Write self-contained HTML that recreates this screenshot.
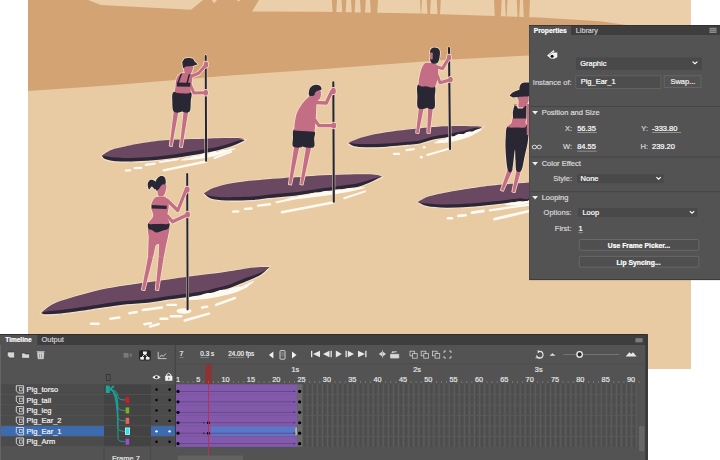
<!DOCTYPE html>
<html><head><meta charset="utf-8">
<style>
html,body{margin:0;padding:0;width:720px;height:460px;overflow:hidden;background:#fff;}
svg{position:absolute;left:0;top:0;display:block;}
text{font-family:"Liberation Sans",sans-serif;}
</style></head><body>
<svg width="720" height="460" viewBox="0 0 720 460">
<defs><clipPath id="cs"><rect x="28" y="0" width="663" height="369"/></clipPath></defs>

<g clip-path="url(#cs)">
<rect x="28" y="0" width="663" height="369" fill="#e8caa3"/>
<rect x="28" y="0" width="663" height="30" fill="#ebcfab"/>
<polygon fill="#d4a373" points="28,0 88,0 101,5 191,9.7 203,0 211.7,0 214,3.5 217,0 236.7,0 238.5,1.5 240.8,0 259,0 252,11.4 320,11.8 420,13.5 540,17.5 600,21.2 630,25.5 691,30 691,52 529,55.5 450,59.5 310,70 230,75.5 108,85.5 28,91"/>
<polygon fill="#d4a373" points="331.8,0 337,0 336.2,12.8 332.6,12.8"/>
<polygon fill="#d4a373" points="341.5,0 346.4,0 345.59999999999997,13 342.3,13"/>
<polygon fill="#d4a373" points="351,0 355.4,0 354.59999999999997,13 351.8,13"/>
<polygon fill="#d4a373" points="360,0 365.8,0 365.0,13 360.8,13"/>
<polygon fill="#d4a373" points="370,0 378,0 377.2,13.2 370.8,13.2"/>
<polygon fill="#d4a373" points="420,0 422,0 421.2,14.5 420.8,14.5"/>
<polygon fill="#d4a373" points="426.7,0 430.8,0 430.0,14.6 427.5,14.6"/>
<polygon fill="#d4a373" points="436.7,0 440.8,0 440.0,14.8 437.5,14.8"/>
<polygon fill="#d4a373" points="494,0 501.7,0 500.9,16.5 494.8,16.5"/>
<polygon fill="#d4a373" points="505,0 507.5,0 506.7,16.6 505.8,16.6"/>
<polygon fill="#d4a373" points="516.7,0 520,0 519.2,17 517.5,17"/>
<polygon fill="#d4a373" points="523,0 530,0 529.2,17.2 523.8,17.2"/>
</g>
<g clip-path="url(#cs)">
<line x1="125.8" y1="170.5" x2="130.2" y2="170.3" stroke="#fdfaf3" stroke-width="2.2" stroke-linecap="round"/>
<line x1="134.7" y1="168.2" x2="141.3" y2="167.8" stroke="#fdfaf3" stroke-width="2.2" stroke-linecap="round"/>
<line x1="145.8" y1="164.9" x2="154.7" y2="163.7" stroke="#fdfaf3" stroke-width="2.3" stroke-linecap="round"/>
<line x1="160" y1="162" x2="178" y2="159.2" stroke="#fdfaf3" stroke-width="2.2" stroke-linecap="round"/>
<line x1="163.6" y1="170.3" x2="206" y2="161.5" stroke="#fdfaf3" stroke-width="2.3" stroke-linecap="round"/>
<line x1="214.4" y1="158" x2="231" y2="151.9" stroke="#fdfaf3" stroke-width="2.0" stroke-linecap="round"/>
<path d="M101.3,155.9 C102.6,155.1 105.9,152.3 109.1,150.9 C112.2,149.5 114.7,148.9 120.2,147.6 C125.8,146.3 135.0,144.3 142.4,143.1 C149.8,141.9 156.4,141.0 164.7,140.3 C173.0,139.6 183.9,139.4 192.2,139.1 C200.5,138.8 207.0,138.4 214.4,138.2 C221.8,138.0 231.4,137.8 236.7,138.0 C242.0,138.2 244.5,139.4 246.1,139.7 C245.4,140.1 244.7,141.2 242.2,142.4 C239.7,143.7 234.8,145.9 231.1,147.2 C227.4,148.5 223.7,149.5 220.0,150.4 C216.3,151.3 213.5,151.9 208.9,152.8 C204.3,153.7 198.7,154.7 192.2,155.8 C185.7,156.9 176.4,158.3 170.0,159.2 C163.6,160.1 160.0,160.5 153.6,161.0 C147.2,161.5 137.8,162.1 131.3,162.2 C124.8,162.3 119.1,162.2 114.7,161.8 C110.3,161.4 106.9,160.6 104.7,159.6 C102.5,158.6 101.9,156.5 101.3,155.9 Z" fill="#2d2637" stroke="#f3e2c9" stroke-width="1.3" stroke-linejoin="round"/>
<path d="M101.3,155.9 C102.6,155.1 105.9,152.3 109.1,150.9 C112.2,149.5 114.7,148.9 120.2,147.6 C125.8,146.3 135.0,144.3 142.4,143.1 C149.8,141.9 156.4,141.0 164.7,140.3 C173.0,139.6 183.9,139.4 192.2,139.1 C200.5,138.8 207.0,138.4 214.4,138.2 C221.8,138.0 231.4,137.8 236.7,138.0 C242.0,138.2 244.5,139.4 246.1,139.7 C245.4,139.7 244.7,139.0 242.2,139.6 C239.7,140.2 234.8,141.9 231.1,143.0 C227.4,144.1 223.7,145.3 220.0,146.2 C216.3,147.1 213.5,147.7 208.9,148.6 C204.3,149.5 198.7,150.5 192.2,151.6 C185.7,152.7 176.4,154.1 170.0,155.0 C163.6,155.9 160.0,156.3 153.6,156.8 C147.2,157.3 137.8,157.9 131.3,158.0 C124.8,158.1 119.1,157.9 114.7,157.6 C110.3,157.3 106.9,156.4 104.7,156.1 C102.5,155.8 101.9,155.9 101.3,155.9 Z" fill="#6a4862"/>
<path d="M180.0,160.4 L180.7,160.0 L181.4,159.6 L182.1,159.3 L182.8,159.0 L183.5,158.7 L184.3,158.4 L185.0,158.2 L185.7,158.0 L186.4,157.9 L187.1,157.8 L187.8,157.7 L188.5,157.7 L189.2,157.8 L189.9,157.6 L190.6,157.1 L191.3,156.8 L192.1,156.4 L192.8,156.2 L193.5,155.9 L194.2,155.7 L194.9,155.6 L195.6,155.5 L196.3,155.4 L197.0,155.5 L197.7,155.6 L198.4,155.8 L199.1,155.8 L199.8,155.2 L200.5,154.8 L201.2,154.4 L201.9,154.1 L202.7,153.8 L203.4,153.6 L204.1,153.5 L204.8,153.4 L205.5,153.4 L206.2,153.5 L206.9,153.6 L207.6,153.8 L208.3,154.3 L209.0,153.6 L209.7,153.1 L210.4,152.7 L211.1,152.4 L211.8,152.1 L212.5,151.9 L213.2,151.7 L213.9,151.6 L214.6,151.6 L215.3,151.6 L216.0,151.7 L216.7,151.9 L217.4,152.2 L218.1,151.9 L218.8,151.4 L219.5,151.0 L220.2,150.7 L220.9,150.5 L221.6,150.3 L222.3,150.1 L223.0,150.0 L223.6,149.9 L224.3,149.9 L225.0,149.9 L225.7,150.0 L226.4,150.1 L227.1,150.1 L227.8,149.6 L228.5,149.3 L229.1,149.1 L229.8,148.8 L230.5,148.7 L231.2,148.6 L231.9,148.5 L232.6,148.5 L233.3,148.4 L233.9,148.4 L234.6,148.5 L235.3,148.5 L236.0,148.6 L236.0,148.6 L235.3,149.0 L234.6,149.4 L233.9,149.7 L233.3,149.9 L232.6,150.2 L231.9,150.5 L231.2,150.8 L230.5,151.0 L229.8,151.3 L229.1,151.6 L228.5,151.8 L227.8,152.1 L227.1,152.3 L226.4,152.6 L225.7,152.8 L225.0,153.1 L224.3,153.3 L223.6,153.5 L223.0,153.8 L222.3,154.0 L221.6,154.2 L220.9,154.4 L220.2,154.6 L219.5,154.8 L218.8,155.0 L218.1,155.2 L217.4,155.3 L216.7,155.5 L216.0,155.7 L215.3,155.9 L214.6,156.1 L213.9,156.2 L213.2,156.4 L212.5,156.6 L211.8,156.8 L211.1,156.9 L210.4,157.1 L209.7,157.2 L209.0,157.4 L208.3,157.5 L207.6,157.6 L206.9,157.7 L206.2,157.9 L205.5,158.0 L204.8,158.1 L204.1,158.2 L203.4,158.3 L202.7,158.4 L201.9,158.5 L201.2,158.6 L200.5,158.8 L199.8,158.9 L199.1,159.0 L198.4,159.1 L197.7,159.2 L197.0,159.3 L196.3,159.4 L195.6,159.5 L194.9,159.5 L194.2,159.6 L193.5,159.7 L192.8,159.8 L192.1,159.8 L191.3,159.9 L190.6,160.0 L189.9,160.0 L189.2,160.1 L188.5,160.1 L187.8,160.2 L187.1,160.3 L186.4,160.3 L185.7,160.4 L185.0,160.4 L184.3,160.4 L183.5,160.5 L182.8,160.5 L182.1,160.5 L181.4,160.5 L180.7,160.5 L180.0,160.4 Z" fill="#fdfaf3"/>
<line x1="205.7" y1="56" x2="206.1" y2="160.8" stroke="#f3e2c9" stroke-width="2.9" stroke-linecap="round"/>
<line x1="205.7" y1="56" x2="206.1" y2="160.8" stroke="#262430" stroke-width="2.0" stroke-linecap="round"/>
<path d="M174.2,107.6 L169.6,145.8 L172.0,146.2 L179.0,108.4 Z" fill="#f3e2c9" stroke="#f3e2c9" stroke-width="1.5" stroke-linejoin="round"/>
<path d="M184.0,107.7 L179.8,146.8 L182.2,147.2 L188.8,108.3 Z" fill="#f3e2c9" stroke="#f3e2c9" stroke-width="1.5" stroke-linejoin="round"/>
<path d="M191.0,76.5 L198.6,73.2 L204.5,66.4" fill="none" stroke="#f3e2c9" stroke-width="4.5" stroke-linecap="round" stroke-linejoin="round"/>
<path d="M189.8,83.5 L194.0,93.1 L204.5,92.7" fill="none" stroke="#f3e2c9" stroke-width="4.5" stroke-linecap="round" stroke-linejoin="round"/>
<path d="M173.3,92.3 C174.8,90.8 178.6,92.0 181.5,92.0 C184.4,92.0 189.4,90.9 191.0,92.4 C192.6,93.9 191.0,97.8 190.8,101.0 C190.6,104.2 191.0,109.8 189.6,111.6 C188.2,113.4 183.8,112.6 182.6,111.8 C181.4,111.0 182.4,106.5 182.2,106.5 C182.0,106.5 183.0,111.0 181.6,111.8 C180.2,112.6 175.4,113.4 173.8,111.6 C172.2,109.8 172.4,104.2 172.3,101.0 C172.2,97.8 171.8,93.8 173.3,92.3 Z" fill="#f3e2c9" stroke="#f3e2c9" stroke-width="1.5" stroke-linejoin="round"/>
<path d="M181.0,73.4 C182.5,72.6 184.3,73.0 186.0,73.0 C187.7,73.0 190.0,72.3 191.0,73.5 C192.0,74.7 192.3,77.9 192.2,80.0 C192.1,82.1 191.0,83.9 190.6,86.0 C190.2,88.1 191.4,91.6 190.0,92.8 C188.6,94.0 184.4,93.3 182.0,93.2 C179.6,93.1 176.5,93.5 175.4,92.3 C174.3,91.1 175.4,88.4 175.6,86.0 C175.8,83.6 175.9,80.1 176.8,78.0 C177.7,75.9 179.5,74.2 181.0,73.4 Z" fill="#f3e2c9" stroke="#f3e2c9" stroke-width="1.5" stroke-linejoin="round"/>
<path d="M184.3,66.5 C185.5,65.2 191.4,65.7 192.8,66.2 C194.2,66.7 193.0,68.2 192.6,69.5 C192.2,70.8 191.7,73.0 190.5,73.8 C189.3,74.5 186.5,75.2 185.5,74.0 C184.5,72.8 183.1,67.8 184.3,66.5 Z" fill="#f3e2c9" stroke="#f3e2c9" stroke-width="1.5" stroke-linejoin="round"/>
<path d="M183.0,68.2 L182.2,62.0 L184.5,58.6 L189.0,57.7 L193.0,58.8 L194.8,61.8 L197.8,64.3 L192.8,65.9 L186.0,66.6 Z" fill="#f3e2c9" stroke="#f3e2c9" stroke-width="1.5" stroke-linejoin="round"/>
<path d="M203.8,64.6 a2.2,3.2 0 1,0 4.4,0 a2.2,3.2 0 1,0 -4.4,0 Z" fill="#f3e2c9" stroke="#f3e2c9" stroke-width="1.5" stroke-linejoin="round"/>
<path d="M203.6,92.8 a2.2,3.0 0 1,0 4.4,0 a2.2,3.0 0 1,0 -4.4,0 Z" fill="#f3e2c9" stroke="#f3e2c9" stroke-width="1.5" stroke-linejoin="round"/>
<path d="M174.2,107.6 L169.6,145.8 L172.0,146.2 L179.0,108.4 Z" fill="#c46e86"/>
<path d="M184.0,107.7 L179.8,146.8 L182.2,147.2 L188.8,108.3 Z" fill="#c46e86"/>
<path d="M191.0,76.5 L198.6,73.2 L204.5,66.4" fill="none" stroke="#c46e86" stroke-width="3.0" stroke-linecap="round" stroke-linejoin="round"/>
<path d="M189.8,83.5 L194.0,93.1 L204.5,92.7" fill="none" stroke="#c46e86" stroke-width="3.0" stroke-linecap="round" stroke-linejoin="round"/>
<path d="M173.3,92.3 C174.8,90.8 178.6,92.0 181.5,92.0 C184.4,92.0 189.4,90.9 191.0,92.4 C192.6,93.9 191.0,97.8 190.8,101.0 C190.6,104.2 191.0,109.8 189.6,111.6 C188.2,113.4 183.8,112.6 182.6,111.8 C181.4,111.0 182.4,106.5 182.2,106.5 C182.0,106.5 183.0,111.0 181.6,111.8 C180.2,112.6 175.4,113.4 173.8,111.6 C172.2,109.8 172.4,104.2 172.3,101.0 C172.2,97.8 171.8,93.8 173.3,92.3 Z" fill="#2a2735"/>
<path d="M181.0,73.4 C182.5,72.6 184.3,73.0 186.0,73.0 C187.7,73.0 190.0,72.3 191.0,73.5 C192.0,74.7 192.3,77.9 192.2,80.0 C192.1,82.1 191.0,83.9 190.6,86.0 C190.2,88.1 191.4,91.6 190.0,92.8 C188.6,94.0 184.4,93.3 182.0,93.2 C179.6,93.1 176.5,93.5 175.4,92.3 C174.3,91.1 175.4,88.4 175.6,86.0 C175.8,83.6 175.9,80.1 176.8,78.0 C177.7,75.9 179.5,74.2 181.0,73.4 Z" fill="#c46e86"/>
<path d="M181.2,74.2 L177.8,83.6" fill="none" stroke="#2a2735" stroke-width="1.5" stroke-linecap="round" stroke-linejoin="round"/>
<path d="M189.4,74.2 L187.0,83.6" fill="none" stroke="#2a2735" stroke-width="1.5" stroke-linecap="round" stroke-linejoin="round"/>
<path d="M176.9,82.6 L190.6,82.8 L190.1,86.8 L176.9,86.4 Z" fill="#2a2735"/>
<path d="M184.3,66.5 C185.5,65.2 191.4,65.7 192.8,66.2 C194.2,66.7 193.0,68.2 192.6,69.5 C192.2,70.8 191.7,73.0 190.5,73.8 C189.3,74.5 186.5,75.2 185.5,74.0 C184.5,72.8 183.1,67.8 184.3,66.5 Z" fill="#c46e86"/>
<path d="M183.0,68.2 L182.2,62.0 L184.5,58.6 L189.0,57.7 L193.0,58.8 L194.8,61.8 L197.8,64.3 L192.8,65.9 L186.0,66.6 Z" fill="#2a2735"/>
<path d="M203.8,64.6 a2.2,3.2 0 1,0 4.4,0 a2.2,3.2 0 1,0 -4.4,0 Z" fill="#c46e86"/>
<path d="M203.6,92.8 a2.2,3.0 0 1,0 4.4,0 a2.2,3.0 0 1,0 -4.4,0 Z" fill="#c46e86"/>
<line x1="233" y1="211.6" x2="238.3" y2="211.4" stroke="#fdfaf3" stroke-width="2.4" stroke-linecap="round"/>
<line x1="244.9" y1="208.9" x2="251.5" y2="208.5" stroke="#fdfaf3" stroke-width="2.4" stroke-linecap="round"/>
<line x1="258" y1="205.6" x2="270" y2="204.3" stroke="#fdfaf3" stroke-width="2.4" stroke-linecap="round"/>
<line x1="276.5" y1="202.3" x2="295" y2="198.4" stroke="#fdfaf3" stroke-width="2.0" stroke-linecap="round"/>
<line x1="281.8" y1="212.2" x2="333" y2="202.5" stroke="#fdfaf3" stroke-width="2.5" stroke-linecap="round"/>
<line x1="344.2" y1="198.3" x2="365" y2="191.4" stroke="#fdfaf3" stroke-width="2.0" stroke-linecap="round"/>
<path d="M203.6,193.6 C205.2,192.7 208.3,189.8 213.2,188.0 C218.1,186.2 225.3,184.3 233.0,183.0 C240.7,181.7 249.1,180.8 259.4,179.9 C269.7,179.0 285.3,178.1 295.0,177.3 C304.7,176.6 309.4,175.9 317.8,175.4 C326.2,174.9 336.4,174.6 345.6,174.4 C354.9,174.2 367.1,174.0 373.3,174.4 C379.5,174.8 381.2,176.4 382.8,176.8 C381.2,177.6 377.2,179.8 373.3,181.5 C369.4,183.2 363.3,185.8 359.4,187.0 C355.5,188.2 354.7,187.9 350.0,188.6 C345.3,189.3 337.0,190.4 331.1,191.2 C325.2,192.0 320.9,192.5 314.4,193.4 C307.9,194.3 299.6,195.7 292.2,196.6 C284.8,197.5 276.6,197.9 270.0,198.6 C263.4,199.3 260.1,200.2 252.8,200.6 C245.5,201.0 233.4,201.4 226.4,201.2 C219.4,201.0 214.4,200.5 210.6,199.2 C206.8,197.9 204.8,194.5 203.6,193.6 Z" fill="#2d2637" stroke="#f3e2c9" stroke-width="1.3" stroke-linejoin="round"/>
<path d="M203.6,193.6 C205.2,192.7 208.3,189.8 213.2,188.0 C218.1,186.2 225.3,184.3 233.0,183.0 C240.7,181.7 249.1,180.8 259.4,179.9 C269.7,179.0 285.3,178.1 295.0,177.3 C304.7,176.6 309.4,175.9 317.8,175.4 C326.2,174.9 336.4,174.6 345.6,174.4 C354.9,174.2 367.1,174.0 373.3,174.4 C379.5,174.8 381.2,176.4 382.8,176.8 C381.2,177.1 377.2,177.8 373.3,178.8 C369.4,179.9 363.3,182.0 359.4,183.0 C355.5,184.0 354.7,183.9 350.0,184.6 C345.3,185.3 337.0,186.4 331.1,187.2 C325.2,188.0 320.9,188.5 314.4,189.4 C307.9,190.3 299.6,191.7 292.2,192.6 C284.8,193.5 276.6,193.9 270.0,194.6 C263.4,195.3 260.1,196.2 252.8,196.6 C245.5,197.0 233.4,197.3 226.4,197.2 C219.4,197.1 214.4,196.5 210.6,195.9 C206.8,195.3 204.8,194.0 203.6,193.6 Z" fill="#6a4862"/>
<path d="M284.0,199.6 L285.0,199.2 L286.1,198.8 L287.1,198.5 L288.1,198.2 L289.2,197.9 L290.2,197.6 L291.2,197.4 L292.2,197.2 L293.3,197.1 L294.3,197.1 L295.3,197.2 L296.4,197.0 L297.4,196.5 L298.4,196.1 L299.5,195.8 L300.5,195.5 L301.5,195.2 L302.5,195.0 L303.6,194.9 L304.6,194.8 L305.6,194.9 L306.6,195.0 L307.7,195.1 L308.7,194.5 L309.7,194.0 L310.7,193.6 L311.8,193.2 L312.8,193.0 L313.8,192.8 L314.8,192.7 L315.9,192.6 L316.9,192.7 L317.9,192.8 L318.9,193.1 L320.0,192.7 L321.0,192.2 L322.0,191.8 L323.0,191.4 L324.1,191.2 L325.1,191.0 L326.1,190.9 L327.1,190.8 L328.2,190.9 L329.2,191.0 L330.2,191.3 L331.2,191.4 L332.3,190.8 L333.3,190.3 L334.3,190.0 L335.3,189.7 L336.4,189.5 L337.4,189.4 L338.4,189.4 L339.5,189.4 L340.5,189.5 L341.5,189.7 L342.5,190.1 L343.6,189.6 L344.6,189.2 L345.6,188.9 L346.6,188.6 L347.7,188.5 L348.7,188.3 L349.7,188.3 L350.7,188.2 L351.7,188.3 L352.8,188.3 L353.8,188.5 L354.8,188.4 L355.8,188.0 L356.8,187.7 L357.9,187.5 L358.9,187.4 L359.9,187.3 L360.9,187.2 L361.9,187.2 L362.9,187.2 L364.0,187.2 L365.0,187.3 L366.0,187.4 L366.0,187.4 L365.0,187.8 L364.0,188.1 L362.9,188.4 L361.9,188.7 L360.9,189.0 L359.9,189.2 L358.9,189.5 L357.9,189.7 L356.8,190.0 L355.8,190.2 L354.8,190.5 L353.8,190.7 L352.8,190.9 L351.7,191.2 L350.7,191.4 L349.7,191.6 L348.7,191.9 L347.7,192.1 L346.6,192.3 L345.6,192.4 L344.6,192.6 L343.6,192.8 L342.5,193.0 L341.5,193.1 L340.5,193.3 L339.5,193.5 L338.4,193.6 L337.4,193.8 L336.4,194.0 L335.3,194.1 L334.3,194.3 L333.3,194.4 L332.3,194.6 L331.2,194.8 L330.2,194.9 L329.2,195.1 L328.2,195.2 L327.1,195.4 L326.1,195.5 L325.1,195.7 L324.1,195.8 L323.0,196.0 L322.0,196.1 L321.0,196.2 L320.0,196.4 L318.9,196.5 L317.9,196.7 L316.9,196.8 L315.9,196.9 L314.8,197.1 L313.8,197.2 L312.8,197.3 L311.8,197.5 L310.7,197.6 L309.7,197.8 L308.7,197.9 L307.7,198.0 L306.6,198.1 L305.6,198.3 L304.6,198.4 L303.6,198.5 L302.5,198.6 L301.5,198.8 L300.5,198.9 L299.5,199.0 L298.4,199.1 L297.4,199.1 L296.4,199.2 L295.3,199.3 L294.3,199.3 L293.3,199.4 L292.2,199.5 L291.2,199.5 L290.2,199.6 L289.2,199.6 L288.1,199.7 L287.1,199.7 L286.1,199.7 L285.0,199.7 L284.0,199.6 Z" fill="#fdfaf3"/>
<line x1="333.3" y1="82.4" x2="333.8" y2="201.8" stroke="#f3e2c9" stroke-width="3.0" stroke-linecap="round"/>
<line x1="333.3" y1="82.4" x2="333.8" y2="201.8" stroke="#262430" stroke-width="2.1" stroke-linecap="round"/>
<path d="M294.4,144.5 L288.7,184.3 L291.3,184.7 L299.6,145.5 Z" fill="#f3e2c9" stroke="#f3e2c9" stroke-width="1.5" stroke-linejoin="round"/>
<path d="M306.4,144.5 L300.2,184.3 L302.8,184.7 L311.6,145.5 Z" fill="#f3e2c9" stroke="#f3e2c9" stroke-width="1.5" stroke-linejoin="round"/>
<path d="M315.7,102.5 L326.3,103.0 L331.7,91.4" fill="none" stroke="#f3e2c9" stroke-width="4.9" stroke-linecap="round" stroke-linejoin="round"/>
<path d="M314.9,120.0 L318.9,125.7 L333.2,125.7" fill="none" stroke="#f3e2c9" stroke-width="4.7" stroke-linecap="round" stroke-linejoin="round"/>
<path d="M294.0,129.5 C295.8,128.3 300.6,130.5 304.0,130.8 C307.4,131.2 312.7,130.2 314.4,131.6 C316.1,133.0 314.3,136.4 314.2,139.0 C314.1,141.6 315.5,145.9 313.7,147.2 C311.9,148.5 305.0,147.6 303.2,146.8 C301.4,146.0 302.9,142.6 302.7,142.6 C302.5,142.6 303.6,146.3 302.0,147.0 C300.4,147.7 294.7,148.1 293.2,146.6 C291.7,145.1 292.9,140.8 293.0,138.0 C293.1,135.2 292.2,130.7 294.0,129.5 Z" fill="#f3e2c9" stroke="#f3e2c9" stroke-width="1.5" stroke-linejoin="round"/>
<path d="M309,96.8 L316.6,100.8 Q316.2,116 314.6,131.8 L294.2,130.4 Q294.2,122 296.5,114 Q301,103 309,96.8 Z" fill="#f3e2c9" stroke="#f3e2c9" stroke-width="1.5" stroke-linejoin="round"/>
<path d="M309.5,95.5 C310.4,93.8 313.0,91.5 314.5,90.5 C316.0,89.5 317.4,89.4 318.5,89.6 C319.6,89.8 320.5,90.2 320.8,91.5 C321.1,92.8 321.0,95.9 320.4,97.5 C319.8,99.1 318.5,100.1 317.4,101.0 C316.2,101.9 314.9,103.0 313.5,103.0 C312.1,103.0 309.7,102.2 309.0,101.0 C308.3,99.8 308.6,97.2 309.5,95.5 Z" fill="#f3e2c9" stroke="#f3e2c9" stroke-width="1.5" stroke-linejoin="round"/>
<path d="M309.2,95.4 C308.4,94.4 308.8,91.1 309.4,89.5 C309.9,87.9 311.3,86.6 312.5,85.8 C313.7,85.0 315.4,84.7 316.8,84.8 C318.2,84.9 319.8,85.6 320.6,86.4 C321.4,87.2 321.8,88.7 321.4,89.4 C321.0,90.1 319.2,89.9 318.2,90.4 C317.2,90.9 316.1,91.4 315.4,92.2 C314.7,93.0 315.0,94.9 314.0,95.4 C313.0,95.9 310.0,96.4 309.2,95.4 Z" fill="#f3e2c9" stroke="#f3e2c9" stroke-width="1.5" stroke-linejoin="round"/>
<path d="M331.0,91.0 a2.4,3.2 0 1,0 4.8,0 a2.4,3.2 0 1,0 -4.8,0 Z" fill="#f3e2c9" stroke="#f3e2c9" stroke-width="1.5" stroke-linejoin="round"/>
<path d="M331.4,125.6 a2.4,3.0 0 1,0 4.8,0 a2.4,3.0 0 1,0 -4.8,0 Z" fill="#f3e2c9" stroke="#f3e2c9" stroke-width="1.5" stroke-linejoin="round"/>
<path d="M294.4,144.5 L288.7,184.3 L291.3,184.7 L299.6,145.5 Z" fill="#c46e86"/>
<path d="M306.4,144.5 L300.2,184.3 L302.8,184.7 L311.6,145.5 Z" fill="#c46e86"/>
<path d="M315.7,102.5 L326.3,103.0 L331.7,91.4" fill="none" stroke="#c46e86" stroke-width="3.4" stroke-linecap="round" stroke-linejoin="round"/>
<path d="M314.9,120.0 L318.9,125.7 L333.2,125.7" fill="none" stroke="#c46e86" stroke-width="3.2" stroke-linecap="round" stroke-linejoin="round"/>
<path d="M294.0,129.5 C295.8,128.3 300.6,130.5 304.0,130.8 C307.4,131.2 312.7,130.2 314.4,131.6 C316.1,133.0 314.3,136.4 314.2,139.0 C314.1,141.6 315.5,145.9 313.7,147.2 C311.9,148.5 305.0,147.6 303.2,146.8 C301.4,146.0 302.9,142.6 302.7,142.6 C302.5,142.6 303.6,146.3 302.0,147.0 C300.4,147.7 294.7,148.1 293.2,146.6 C291.7,145.1 292.9,140.8 293.0,138.0 C293.1,135.2 292.2,130.7 294.0,129.5 Z" fill="#2a2735"/>
<path d="M309,96.8 L316.6,100.8 Q316.2,116 314.6,131.8 L294.2,130.4 Q294.2,122 296.5,114 Q301,103 309,96.8 Z" fill="#c46e86"/>
<path d="M309.5,95.5 C310.4,93.8 313.0,91.5 314.5,90.5 C316.0,89.5 317.4,89.4 318.5,89.6 C319.6,89.8 320.5,90.2 320.8,91.5 C321.1,92.8 321.0,95.9 320.4,97.5 C319.8,99.1 318.5,100.1 317.4,101.0 C316.2,101.9 314.9,103.0 313.5,103.0 C312.1,103.0 309.7,102.2 309.0,101.0 C308.3,99.8 308.6,97.2 309.5,95.5 Z" fill="#c46e86"/>
<path d="M309.2,95.4 C308.4,94.4 308.8,91.1 309.4,89.5 C309.9,87.9 311.3,86.6 312.5,85.8 C313.7,85.0 315.4,84.7 316.8,84.8 C318.2,84.9 319.8,85.6 320.6,86.4 C321.4,87.2 321.8,88.7 321.4,89.4 C321.0,90.1 319.2,89.9 318.2,90.4 C317.2,90.9 316.1,91.4 315.4,92.2 C314.7,93.0 315.0,94.9 314.0,95.4 C313.0,95.9 310.0,96.4 309.2,95.4 Z" fill="#2a2735"/>
<path d="M331.0,91.0 a2.4,3.2 0 1,0 4.8,0 a2.4,3.2 0 1,0 -4.8,0 Z" fill="#c46e86"/>
<path d="M331.4,125.6 a2.4,3.0 0 1,0 4.8,0 a2.4,3.0 0 1,0 -4.8,0 Z" fill="#c46e86"/>
<line x1="394" y1="153.9" x2="399.2" y2="153.9" stroke="#fdfaf3" stroke-width="2.3" stroke-linecap="round"/>
<line x1="406.5" y1="150.2" x2="413.75" y2="149.2" stroke="#fdfaf3" stroke-width="2.3" stroke-linecap="round"/>
<line x1="423.9" y1="147.2" x2="424.5" y2="147.2" stroke="#fdfaf3" stroke-width="2.4" stroke-linecap="round"/>
<line x1="421.1" y1="157.2" x2="421.6" y2="157.2" stroke="#fdfaf3" stroke-width="2.4" stroke-linecap="round"/>
<line x1="427.2" y1="155" x2="450.6" y2="148.3" stroke="#fdfaf3" stroke-width="2.0" stroke-linecap="round"/>
<path d="M347.6,143.4 C348.9,142.8 351.5,141.2 355.4,139.8 C359.3,138.4 364.9,136.5 371.0,135.1 C377.1,133.7 383.7,132.6 391.9,131.5 C400.1,130.4 412.4,129.1 420.0,128.3 C427.6,127.5 430.6,127.1 437.2,126.7 C443.8,126.3 451.6,126.1 459.4,126.1 C467.2,126.1 479.8,126.6 483.9,126.7 C483.1,127.2 481.6,128.4 479.4,129.4 C477.2,130.4 473.9,131.8 470.6,132.8 C467.3,133.8 463.1,134.8 459.4,135.6 C455.7,136.4 452.9,137.0 448.3,137.8 C443.7,138.6 436.4,139.5 431.7,140.6 C427.0,141.7 424.0,143.4 420.0,144.2 C416.0,145.0 413.1,145.0 407.5,145.5 C401.9,146.0 393.6,146.9 386.7,147.3 C379.8,147.7 371.4,148.0 365.8,147.9 C360.2,147.8 356.3,147.3 353.3,146.6 C350.3,145.8 348.6,143.9 347.6,143.4 Z" fill="#2d2637" stroke="#f3e2c9" stroke-width="1.3" stroke-linejoin="round"/>
<path d="M347.6,143.4 C348.9,142.8 351.5,141.2 355.4,139.8 C359.3,138.4 364.9,136.5 371.0,135.1 C377.1,133.7 383.7,132.6 391.9,131.5 C400.1,130.4 412.4,129.1 420.0,128.3 C427.6,127.5 430.6,127.1 437.2,126.7 C443.8,126.3 451.6,126.1 459.4,126.1 C467.2,126.1 479.8,126.6 483.9,126.7 C483.1,126.7 481.6,126.5 479.4,126.9 C477.2,127.2 473.9,128.2 470.6,129.0 C467.3,129.8 463.1,131.0 459.4,131.8 C455.7,132.6 452.9,133.2 448.3,134.0 C443.7,134.8 436.4,135.7 431.7,136.8 C427.0,137.9 424.0,139.6 420.0,140.4 C416.0,141.2 413.1,141.2 407.5,141.7 C401.9,142.2 393.6,143.1 386.7,143.5 C379.8,143.9 371.4,144.1 365.8,144.1 C360.2,144.1 356.3,143.6 353.3,143.4 C350.3,143.3 348.6,143.4 347.6,143.4 Z" fill="#6a4862"/>
<path d="M434.0,143.0 L434.6,142.5 L435.2,142.1 L435.9,141.7 L436.5,141.4 L437.1,141.0 L437.7,140.7 L438.3,140.4 L438.9,140.1 L439.6,139.9 L440.2,139.7 L440.8,139.6 L441.4,139.5 L442.0,139.4 L442.7,139.4 L443.3,139.5 L443.9,139.8 L444.5,139.2 L445.1,138.7 L445.7,138.3 L446.4,137.9 L447.0,137.6 L447.6,137.3 L448.2,137.1 L448.8,136.9 L449.4,136.7 L450.0,136.6 L450.7,136.5 L451.3,136.5 L451.9,136.5 L452.5,136.6 L453.1,136.8 L453.7,137.3 L454.3,136.5 L454.9,136.0 L455.5,135.5 L456.1,135.1 L456.8,134.8 L457.4,134.5 L458.0,134.3 L458.6,134.1 L459.2,134.0 L459.8,133.9 L460.4,133.9 L461.0,133.9 L461.6,133.9 L462.2,134.1 L462.8,134.3 L463.4,134.7 L464.0,134.0 L464.6,133.4 L465.2,133.0 L465.8,132.6 L466.4,132.3 L467.0,132.1 L467.6,131.9 L468.2,131.7 L468.8,131.6 L469.4,131.6 L470.0,131.6 L470.6,131.6 L471.2,131.6 L471.7,131.7 L472.3,131.8 L472.9,132.0 L473.4,131.4 L474.0,130.9 L474.6,130.6 L475.2,130.2 L475.7,130.0 L476.3,129.8 L476.9,129.6 L477.4,129.5 L478.0,129.4 L478.6,129.3 L479.1,129.3 L479.7,129.2 L480.3,129.2 L480.9,129.2 L481.4,129.3 L482.0,129.4 L482.0,129.4 L481.4,130.0 L480.9,130.4 L480.3,130.8 L479.7,131.1 L479.1,131.5 L478.6,131.8 L478.0,132.2 L477.4,132.5 L476.9,132.9 L476.3,133.2 L475.7,133.5 L475.2,133.8 L474.6,134.1 L474.0,134.5 L473.4,134.8 L472.9,135.1 L472.3,135.4 L471.7,135.7 L471.2,136.0 L470.6,136.3 L470.0,136.5 L469.4,136.7 L468.8,137.0 L468.2,137.2 L467.6,137.4 L467.0,137.6 L466.4,137.8 L465.8,138.0 L465.2,138.2 L464.6,138.4 L464.0,138.6 L463.4,138.8 L462.8,139.0 L462.2,139.2 L461.6,139.4 L461.0,139.6 L460.4,139.8 L459.8,140.0 L459.2,140.1 L458.6,140.3 L458.0,140.4 L457.4,140.6 L456.8,140.7 L456.1,140.8 L455.5,141.0 L454.9,141.1 L454.3,141.2 L453.7,141.4 L453.1,141.5 L452.5,141.6 L451.9,141.7 L451.3,141.9 L450.7,142.0 L450.0,142.1 L449.4,142.2 L448.8,142.3 L448.2,142.4 L447.6,142.5 L447.0,142.6 L446.4,142.6 L445.7,142.7 L445.1,142.8 L444.5,142.8 L443.9,142.9 L443.3,142.9 L442.7,143.0 L442.0,143.0 L441.4,143.1 L440.8,143.1 L440.2,143.1 L439.6,143.2 L438.9,143.2 L438.3,143.2 L437.7,143.3 L437.1,143.3 L436.5,143.3 L435.9,143.3 L435.2,143.2 L434.6,143.2 L434.0,143.0 Z" fill="#fdfaf3"/>
<line x1="449" y1="48" x2="450" y2="148.9" stroke="#f3e2c9" stroke-width="3.0" stroke-linecap="round"/>
<line x1="449" y1="48" x2="450" y2="148.9" stroke="#262430" stroke-width="2.1" stroke-linecap="round"/>
<path d="M419.2,105.6 L416.0,132.8 L418.6,133.2 L424.0,106.4 Z" fill="#f3e2c9" stroke="#f3e2c9" stroke-width="1.5" stroke-linejoin="round"/>
<path d="M428.2,105.8 L427.2,132.9 L429.8,133.1 L433.0,106.2 Z" fill="#f3e2c9" stroke="#f3e2c9" stroke-width="1.5" stroke-linejoin="round"/>
<path d="M436.8,66.8 L442.4,68.6 L449.0,57.7" fill="none" stroke="#f3e2c9" stroke-width="4.5" stroke-linecap="round" stroke-linejoin="round"/>
<path d="M436.8,74.4 L440.1,82.8 L450.5,79.8" fill="none" stroke="#f3e2c9" stroke-width="4.5" stroke-linecap="round" stroke-linejoin="round"/>
<path d="M417.8,85.0 C419.2,83.3 423.2,85.4 426.0,85.6 C428.8,85.8 433.2,84.3 434.7,86.2 C436.2,88.1 434.9,93.3 434.8,97.0 C434.8,100.7 435.6,106.2 434.4,108.1 C433.2,110.0 428.8,108.8 427.6,108.2 C426.4,107.6 427.2,104.6 427.0,104.6 C426.8,104.6 427.9,107.6 426.4,108.2 C424.9,108.8 419.6,110.0 418.1,108.0 C416.6,106.0 417.4,99.8 417.4,96.0 C417.3,92.2 416.4,86.7 417.8,85.0 Z" fill="#f3e2c9" stroke="#f3e2c9" stroke-width="1.5" stroke-linejoin="round"/>
<path d="M423.8,64.3 C425.5,62.4 427.8,62.9 430.0,63.0 C432.2,63.1 435.7,63.1 437.0,65.0 C438.3,66.9 438.4,70.8 438.0,74.4 C437.6,78.0 436.7,84.8 434.7,86.8 C432.7,88.8 428.6,86.5 426.0,86.2 C423.4,86.0 420.1,87.3 419.1,85.3 C418.1,83.3 419.1,77.9 419.9,74.4 C420.7,70.9 422.1,66.2 423.8,64.3 Z" fill="#f3e2c9" stroke="#f3e2c9" stroke-width="1.5" stroke-linejoin="round"/>
<path d="M430.4,50.0 C431.2,47.9 433.3,47.6 434.8,47.6 C436.3,47.6 438.7,48.4 439.5,50.0 C440.3,51.6 439.9,54.9 439.6,57.0 C439.3,59.1 438.7,61.7 437.6,62.8 C436.5,63.9 434.0,64.1 432.8,63.6 C431.6,63.1 430.6,62.3 430.2,60.0 C429.8,57.7 429.6,52.1 430.4,50.0 Z" fill="#f3e2c9" stroke="#f3e2c9" stroke-width="1.5" stroke-linejoin="round"/>
<path d="M446.8,57.6 a2.2,3.0 0 1,0 4.4,0 a2.2,3.0 0 1,0 -4.4,0 Z" fill="#f3e2c9" stroke="#f3e2c9" stroke-width="1.5" stroke-linejoin="round"/>
<path d="M448.2,79.6 a2.3,2.8 0 1,0 4.6,0 a2.3,2.8 0 1,0 -4.6,0 Z" fill="#f3e2c9" stroke="#f3e2c9" stroke-width="1.5" stroke-linejoin="round"/>
<path d="M419.2,105.6 L416.0,132.8 L418.6,133.2 L424.0,106.4 Z" fill="#c46e86"/>
<path d="M428.2,105.8 L427.2,132.9 L429.8,133.1 L433.0,106.2 Z" fill="#c46e86"/>
<path d="M436.8,66.8 L442.4,68.6 L449.0,57.7" fill="none" stroke="#c46e86" stroke-width="3.0" stroke-linecap="round" stroke-linejoin="round"/>
<path d="M436.8,74.4 L440.1,82.8 L450.5,79.8" fill="none" stroke="#c46e86" stroke-width="3.0" stroke-linecap="round" stroke-linejoin="round"/>
<path d="M417.8,85.0 C419.2,83.3 423.2,85.4 426.0,85.6 C428.8,85.8 433.2,84.3 434.7,86.2 C436.2,88.1 434.9,93.3 434.8,97.0 C434.8,100.7 435.6,106.2 434.4,108.1 C433.2,110.0 428.8,108.8 427.6,108.2 C426.4,107.6 427.2,104.6 427.0,104.6 C426.8,104.6 427.9,107.6 426.4,108.2 C424.9,108.8 419.6,110.0 418.1,108.0 C416.6,106.0 417.4,99.8 417.4,96.0 C417.3,92.2 416.4,86.7 417.8,85.0 Z" fill="#2a2735"/>
<path d="M423.8,64.3 C425.5,62.4 427.8,62.9 430.0,63.0 C432.2,63.1 435.7,63.1 437.0,65.0 C438.3,66.9 438.4,70.8 438.0,74.4 C437.6,78.0 436.7,84.8 434.7,86.8 C432.7,88.8 428.6,86.5 426.0,86.2 C423.4,86.0 420.1,87.3 419.1,85.3 C418.1,83.3 419.1,77.9 419.9,74.4 C420.7,70.9 422.1,66.2 423.8,64.3 Z" fill="#c46e86"/>
<path d="M430.4,50.0 C431.2,47.9 433.3,47.6 434.8,47.6 C436.3,47.6 438.7,48.4 439.5,50.0 C440.3,51.6 439.9,54.9 439.6,57.0 C439.3,59.1 438.7,61.7 437.6,62.8 C436.5,63.9 434.0,64.1 432.8,63.6 C431.6,63.1 430.6,62.3 430.2,60.0 C429.8,57.7 429.6,52.1 430.4,50.0 Z" fill="#2a2735"/>
<path d="M430.0,52.4 L432.8,52.8 L432.6,59.5 L430.0,59.2 Z" fill="#c46e86"/>
<path d="M446.8,57.6 a2.2,3.0 0 1,0 4.4,0 a2.2,3.0 0 1,0 -4.4,0 Z" fill="#c46e86"/>
<path d="M448.2,79.6 a2.3,2.8 0 1,0 4.6,0 a2.3,2.8 0 1,0 -4.6,0 Z" fill="#c46e86"/>
<line x1="447.9" y1="218.3" x2="451.9" y2="218.3" stroke="#fdfaf3" stroke-width="2.5" stroke-linecap="round"/>
<line x1="458.4" y1="215.9" x2="465.6" y2="215.3" stroke="#fdfaf3" stroke-width="2.6" stroke-linecap="round"/>
<line x1="472" y1="212.7" x2="483.4" y2="211" stroke="#fdfaf3" stroke-width="2.8" stroke-linecap="round"/>
<line x1="489.8" y1="210.3" x2="529.3" y2="204.6" stroke="#fdfaf3" stroke-width="2.2" stroke-linecap="round"/>
<line x1="494.6" y1="219.1" x2="529.3" y2="211" stroke="#fdfaf3" stroke-width="2.8" stroke-linecap="round"/>
<path d="M417.2,202.2 C419.4,201.2 423.9,198.0 430.1,196.1 C436.3,194.2 446.2,192.4 454.3,190.9 C462.4,189.4 470.4,188.3 478.5,187.2 C486.6,186.1 491.6,185.4 502.7,184.5 C513.8,183.6 538.0,182.0 545.0,181.5 C542.4,184.7 533.7,197.2 529.3,200.6 C524.9,204.0 524.6,201.4 518.8,202.2 C513.0,202.9 502.7,204.2 494.6,205.1 C486.6,206.0 478.6,206.9 470.5,207.4 C462.4,207.9 453.6,208.4 446.3,208.3 C439.0,208.2 431.8,207.7 426.9,206.7 C422.0,205.7 418.8,202.9 417.2,202.2 Z" fill="#2d2637" stroke="#f3e2c9" stroke-width="1.3" stroke-linejoin="round"/>
<path d="M417.2,202.2 C419.4,201.2 423.9,198.0 430.1,196.1 C436.3,194.2 446.2,192.4 454.3,190.9 C462.4,189.4 470.4,188.3 478.5,187.2 C486.6,186.1 491.6,185.4 502.7,184.5 C513.8,183.6 538.0,182.0 545.0,181.5 C542.4,184.3 533.7,195.2 529.3,198.1 C524.9,200.9 524.6,197.9 518.8,198.4 C513.0,198.9 502.7,200.4 494.6,201.3 C486.6,202.2 478.6,203.1 470.5,203.6 C462.4,204.1 453.6,204.5 446.3,204.5 C439.0,204.5 431.8,203.9 426.9,203.5 C422.0,203.2 418.8,202.4 417.2,202.2 Z" fill="#6a4862"/>
<path d="M505.0,204.8 L505.3,204.5 L505.7,204.4 L506.0,204.2 L506.4,204.1 L506.7,203.9 L507.0,203.8 L507.4,203.7 L507.7,203.5 L508.0,203.4 L508.4,203.3 L508.7,203.2 L509.1,203.1 L509.4,203.0 L509.7,202.9 L510.1,202.8 L510.4,202.7 L510.8,202.7 L511.1,202.6 L511.4,202.6 L511.8,202.6 L512.1,202.5 L512.4,202.5 L512.8,202.5 L513.1,202.6 L513.5,202.6 L513.8,202.6 L514.1,202.6 L514.5,202.5 L514.8,202.3 L515.2,202.2 L515.5,202.1 L515.8,202.0 L516.2,201.9 L516.5,201.8 L516.8,201.7 L517.2,201.6 L517.5,201.6 L517.9,201.5 L518.2,201.5 L518.5,201.4 L518.9,201.4 L519.2,201.4 L519.5,201.3 L519.9,201.3 L520.2,201.3 L520.6,201.3 L520.9,201.4 L521.2,201.4 L521.6,201.4 L521.9,201.5 L522.2,201.5 L522.6,201.6 L522.9,201.7 L523.2,201.6 L523.6,201.5 L523.9,201.4 L524.3,201.3 L524.6,201.2 L524.9,201.1 L525.3,201.1 L525.6,201.0 L525.9,201.0 L526.3,201.0 L526.6,201.0 L527.0,200.9 L527.3,201.0 L527.6,201.0 L528.0,201.0 L528.3,201.0 L528.6,201.0 L529.0,201.1 L529.3,201.1 L529.6,201.2 L530.0,201.2 L530.3,201.3 L530.7,201.4 L531.0,201.4 L531.3,201.5 L531.7,201.6 L532.0,201.8 L532.0,201.8 L531.7,202.0 L531.3,202.2 L531.0,202.3 L530.7,202.4 L530.3,202.6 L530.0,202.7 L529.6,202.8 L529.3,202.9 L529.0,203.0 L528.6,203.0 L528.3,203.1 L528.0,203.2 L527.6,203.3 L527.3,203.4 L527.0,203.5 L526.6,203.6 L526.3,203.6 L525.9,203.7 L525.6,203.8 L525.3,203.9 L524.9,203.9 L524.6,204.0 L524.3,204.1 L523.9,204.1 L523.6,204.2 L523.2,204.3 L522.9,204.3 L522.6,204.4 L522.2,204.5 L521.9,204.5 L521.6,204.6 L521.2,204.6 L520.9,204.7 L520.6,204.7 L520.2,204.8 L519.9,204.8 L519.5,204.9 L519.2,204.9 L518.9,205.0 L518.5,205.0 L518.2,205.1 L517.9,205.1 L517.5,205.1 L517.2,205.1 L516.8,205.2 L516.5,205.2 L516.2,205.2 L515.8,205.2 L515.5,205.2 L515.2,205.3 L514.8,205.3 L514.5,205.3 L514.1,205.3 L513.8,205.3 L513.5,205.3 L513.1,205.3 L512.8,205.3 L512.4,205.3 L512.1,205.3 L511.8,205.3 L511.4,205.4 L511.1,205.4 L510.8,205.3 L510.4,205.3 L510.1,205.3 L509.7,205.3 L509.4,205.3 L509.1,205.3 L508.7,205.3 L508.4,205.3 L508.0,205.3 L507.7,205.3 L507.4,205.2 L507.0,205.2 L506.7,205.2 L506.4,205.1 L506.0,205.1 L505.7,205.0 L505.3,205.0 L505.0,204.8 Z" fill="#fdfaf3"/>
<path d="M508.6,167.1 L500.8,190.0 L503.2,191.0 L513.0,168.9 Z" fill="#f3e2c9" stroke="#f3e2c9" stroke-width="1.5" stroke-linejoin="round"/>
<path d="M517.0,167.4 L512.2,191.7 L514.8,192.3 L521.6,168.6 Z" fill="#f3e2c9" stroke="#f3e2c9" stroke-width="1.5" stroke-linejoin="round"/>
<path d="M507.6,126.5 C509.5,124.8 513.7,125.8 517.0,125.6 C520.3,125.4 525.7,123.2 527.5,125.6 C529.3,128.0 528.5,134.9 528.0,140.0 C527.5,145.1 525.8,151.0 524.7,156.0 C523.6,161.0 522.8,167.8 521.4,170.2 C520.0,172.6 517.5,172.4 516.5,170.7 C515.5,169.0 515.8,163.4 515.5,160.0 C515.2,156.6 515.4,148.3 514.8,150.0 C514.2,151.7 513.2,166.9 512.0,170.2 C510.8,173.5 508.9,173.2 507.8,169.8 C506.7,166.4 505.9,155.6 505.6,150.0 C505.3,144.4 505.5,139.9 505.8,136.0 C506.1,132.1 505.7,128.2 507.6,126.5 Z" fill="#f3e2c9" stroke="#f3e2c9" stroke-width="1.5" stroke-linejoin="round"/>
<path d="M526.5,104.0 L530.0,104.0 L530.0,135.0 L526.8,135.0 Z" fill="#f3e2c9" stroke="#f3e2c9" stroke-width="1.5" stroke-linejoin="round"/>
<path d="M513.2,117.4 C514.5,116.4 516.9,117.0 519.0,117.0 C521.1,117.0 524.5,116.4 525.6,117.2 C526.7,118.0 525.6,120.3 525.6,122.0 C525.6,123.7 527.0,126.3 525.4,127.2 C523.8,128.1 518.9,127.6 516.0,127.6 C513.1,127.6 508.6,128.0 507.8,127.2 C507.1,126.4 510.6,124.4 511.5,122.8 C512.4,121.2 512.0,118.4 513.2,117.4 Z" fill="#f3e2c9" stroke="#f3e2c9" stroke-width="1.5" stroke-linejoin="round"/>
<path d="M514.2,106.0 L516.0,105.2 L518.0,108.6 L522.6,108.4 L525.4,105.0 L526.4,105.8 L526.2,118.6 L513.0,118.6 L512.8,112.0 Z" fill="#f3e2c9" stroke="#f3e2c9" stroke-width="1.5" stroke-linejoin="round"/>
<path d="M517.2,96.6 C517.9,95.8 521.2,96.2 523.0,96.2 C524.8,96.2 527.3,95.4 528.2,96.4 C529.1,97.4 528.8,100.3 528.2,102.0 C527.6,103.7 526.2,105.5 524.6,106.4 C523.0,107.3 519.8,108.1 518.8,107.2 C517.8,106.3 518.9,102.8 518.6,101.0 C518.3,99.2 516.5,97.4 517.2,96.6 Z" fill="#f3e2c9" stroke="#f3e2c9" stroke-width="1.5" stroke-linejoin="round"/>
<path d="M509.6,95.8 Q511.5,91.8 519.4,89.8 Q519.2,82.6 524.5,82.4 L529.7,82.4 L529.7,96.4 Q521,96.2 513,97.6 Z" fill="#f3e2c9" stroke="#f3e2c9" stroke-width="1.5" stroke-linejoin="round"/>
<path d="M508.6,167.1 L500.8,190.0 L503.2,191.0 L513.0,168.9 Z" fill="#c46e86"/>
<path d="M517.0,167.4 L512.2,191.7 L514.8,192.3 L521.6,168.6 Z" fill="#c46e86"/>
<path d="M507.6,126.5 C509.5,124.8 513.7,125.8 517.0,125.6 C520.3,125.4 525.7,123.2 527.5,125.6 C529.3,128.0 528.5,134.9 528.0,140.0 C527.5,145.1 525.8,151.0 524.7,156.0 C523.6,161.0 522.8,167.8 521.4,170.2 C520.0,172.6 517.5,172.4 516.5,170.7 C515.5,169.0 515.8,163.4 515.5,160.0 C515.2,156.6 515.4,148.3 514.8,150.0 C514.2,151.7 513.2,166.9 512.0,170.2 C510.8,173.5 508.9,173.2 507.8,169.8 C506.7,166.4 505.9,155.6 505.6,150.0 C505.3,144.4 505.5,139.9 505.8,136.0 C506.1,132.1 505.7,128.2 507.6,126.5 Z" fill="#2a2735"/>
<path d="M526.5,104.0 L530.0,104.0 L530.0,135.0 L526.8,135.0 Z" fill="#c46e86"/>
<path d="M513.2,117.4 C514.5,116.4 516.9,117.0 519.0,117.0 C521.1,117.0 524.5,116.4 525.6,117.2 C526.7,118.0 525.6,120.3 525.6,122.0 C525.6,123.7 527.0,126.3 525.4,127.2 C523.8,128.1 518.9,127.6 516.0,127.6 C513.1,127.6 508.6,128.0 507.8,127.2 C507.1,126.4 510.6,124.4 511.5,122.8 C512.4,121.2 512.0,118.4 513.2,117.4 Z" fill="#c46e86"/>
<path d="M514.2,106.0 L516.0,105.2 L518.0,108.6 L522.6,108.4 L525.4,105.0 L526.4,105.8 L526.2,118.6 L513.0,118.6 L512.8,112.0 Z" fill="#2a2735"/>
<path d="M513.8,104.4 L517.2,104.0 L516.0,105.6 L514.2,106.4 Z" fill="#c46e86"/>
<path d="M517.2,96.6 C517.9,95.8 521.2,96.2 523.0,96.2 C524.8,96.2 527.3,95.4 528.2,96.4 C529.1,97.4 528.8,100.3 528.2,102.0 C527.6,103.7 526.2,105.5 524.6,106.4 C523.0,107.3 519.8,108.1 518.8,107.2 C517.8,106.3 518.9,102.8 518.6,101.0 C518.3,99.2 516.5,97.4 517.2,96.6 Z" fill="#c46e86"/>
<path d="M509.6,95.8 Q511.5,91.8 519.4,89.8 Q519.2,82.6 524.5,82.4 L529.7,82.4 L529.7,96.4 Q521,96.2 513,97.6 Z" fill="#2a2735"/>
<line x1="91" y1="323.7" x2="98.5" y2="323.7" stroke="#fdfaf3" stroke-width="2.6" stroke-linecap="round"/>
<line x1="110.2" y1="318.7" x2="119.3" y2="317.5" stroke="#fdfaf3" stroke-width="2.6" stroke-linecap="round"/>
<line x1="129.3" y1="313.3" x2="136.8" y2="312" stroke="#fdfaf3" stroke-width="2.5" stroke-linecap="round"/>
<line x1="142.7" y1="310" x2="162" y2="307.5" stroke="#fdfaf3" stroke-width="2.4" stroke-linecap="round"/>
<line x1="144.3" y1="324.2" x2="151" y2="323.3" stroke="#fdfaf3" stroke-width="2.5" stroke-linecap="round"/>
<line x1="167.4" y1="304.9" x2="176" y2="304.9" stroke="#fdfaf3" stroke-width="2.4" stroke-linecap="round"/>
<line x1="170.8" y1="316.2" x2="181.25" y2="316.2" stroke="#fdfaf3" stroke-width="2.4" stroke-linecap="round"/>
<line x1="160.4" y1="318.8" x2="167.4" y2="318.8" stroke="#fdfaf3" stroke-width="2.4" stroke-linecap="round"/>
<line x1="150" y1="326.6" x2="158.7" y2="324" stroke="#fdfaf3" stroke-width="2.4" stroke-linecap="round"/>
<line x1="184.7" y1="320.5" x2="209" y2="313.6" stroke="#fdfaf3" stroke-width="2.5" stroke-linecap="round"/>
<line x1="202" y1="307.5" x2="207.3" y2="306.6" stroke="#fdfaf3" stroke-width="2.3" stroke-linecap="round"/>
<line x1="216" y1="304.9" x2="235" y2="298" stroke="#fdfaf3" stroke-width="2.5" stroke-linecap="round"/>
<path d="M40.2,313.3 C42.3,311.8 47.9,306.7 52.7,304.2 C57.6,301.7 62.4,300.5 69.3,298.3 C76.2,296.1 86.0,293.2 94.3,291.2 C102.6,289.2 110.0,287.7 119.3,286.2 C128.6,284.7 138.6,283.6 150.0,282.0 C161.4,280.4 175.0,278.5 187.5,276.8 C200.0,275.1 213.9,273.5 225.0,272.0 C236.1,270.5 246.5,268.4 254.0,267.6 C261.5,266.8 267.3,267.1 270.0,267.0 C268.5,268.4 265.2,272.8 261.1,275.4 C257.0,277.9 251.0,280.0 245.5,282.3 C240.0,284.6 233.9,287.4 228.1,289.2 C222.3,291.1 216.6,292.3 210.8,293.6 C205.0,294.9 200.6,295.9 193.4,297.0 C186.2,298.1 174.6,299.5 167.4,300.5 C160.2,301.5 158.0,302.2 150.0,303.1 C142.0,304.0 130.0,304.5 119.3,305.8 C108.6,307.1 95.7,309.4 86.0,310.8 C76.3,312.2 67.7,313.5 61.0,314.2 C54.3,314.9 49.5,315.1 46.0,315.0 C42.5,314.9 41.2,313.6 40.2,313.3 Z" fill="#2d2637" stroke="#f3e2c9" stroke-width="1.3" stroke-linejoin="round"/>
<path d="M40.2,313.3 C42.3,311.8 47.9,306.7 52.7,304.2 C57.6,301.7 62.4,300.5 69.3,298.3 C76.2,296.1 86.0,293.2 94.3,291.2 C102.6,289.2 110.0,287.7 119.3,286.2 C128.6,284.7 138.6,283.6 150.0,282.0 C161.4,280.4 175.0,278.5 187.5,276.8 C200.0,275.1 213.9,273.5 225.0,272.0 C236.1,270.5 246.5,268.4 254.0,267.6 C261.5,266.8 267.3,267.1 270.0,267.0 C268.5,267.9 265.2,270.7 261.1,272.6 C257.0,274.4 251.0,276.0 245.5,278.1 C240.0,280.2 233.9,283.2 228.1,285.1 C222.3,286.9 216.6,288.1 210.8,289.4 C205.0,290.7 200.6,291.7 193.4,292.8 C186.2,293.9 174.6,295.3 167.4,296.3 C160.2,297.3 158.0,298.0 150.0,298.9 C142.0,299.8 130.0,300.3 119.3,301.6 C108.6,302.9 95.7,305.2 86.0,306.6 C76.3,308.0 67.7,309.2 61.0,310.0 C54.3,310.8 49.5,310.9 46.0,311.5 C42.5,312.1 41.2,313.0 40.2,313.3 Z" fill="#6a4862"/>
<path d="M184.0,300.0 L184.9,299.5 L185.8,299.1 L186.7,298.7 L187.7,298.3 L188.6,298.0 L189.5,297.6 L190.4,297.3 L191.3,297.0 L192.2,296.8 L193.1,296.6 L194.1,296.4 L195.0,296.2 L195.9,296.1 L196.8,296.1 L197.7,296.1 L198.6,296.2 L199.5,295.7 L200.5,295.2 L201.4,294.9 L202.3,294.5 L203.2,294.2 L204.1,293.9 L205.0,293.6 L206.0,293.4 L206.9,293.3 L207.8,293.1 L208.7,293.0 L209.6,292.9 L210.5,292.9 L211.4,292.9 L212.3,293.0 L213.2,293.3 L214.1,292.6 L215.0,292.1 L215.9,291.6 L216.8,291.2 L217.7,290.9 L218.6,290.6 L219.5,290.3 L220.5,290.1 L221.4,289.9 L222.3,289.8 L223.2,289.8 L224.1,289.7 L225.0,289.7 L225.9,289.8 L226.8,289.9 L227.7,290.2 L228.6,289.5 L229.5,289.1 L230.4,288.6 L231.3,288.3 L232.2,288.0 L233.1,287.7 L234.0,287.5 L234.9,287.3 L235.8,287.2 L236.6,287.0 L237.5,286.8 L238.3,286.6 L239.2,286.5 L240.1,286.4 L240.9,286.4 L241.8,286.5 L242.6,285.8 L243.5,285.4 L244.4,284.9 L245.2,284.6 L246.1,284.3 L246.9,283.9 L247.7,283.5 L248.4,283.1 L249.2,282.7 L249.9,282.4 L250.7,282.0 L251.5,281.7 L252.2,281.4 L253.0,281.2 L253.7,280.9 L254.5,280.8 L254.5,280.8 L253.7,281.7 L253.0,282.4 L252.2,283.0 L251.5,283.7 L250.7,284.3 L249.9,284.9 L249.2,285.5 L248.4,286.1 L247.7,286.7 L246.9,287.4 L246.1,287.8 L245.2,288.2 L244.4,288.6 L243.5,289.0 L242.6,289.4 L241.8,289.8 L240.9,290.2 L240.1,290.6 L239.2,291.0 L238.3,291.4 L237.5,291.8 L236.6,292.1 L235.8,292.5 L234.9,292.8 L234.0,293.0 L233.1,293.3 L232.2,293.5 L231.3,293.8 L230.4,294.0 L229.5,294.2 L228.6,294.4 L227.7,294.7 L226.8,294.9 L225.9,295.1 L225.0,295.3 L224.1,295.6 L223.2,295.7 L222.3,295.9 L221.4,296.1 L220.5,296.3 L219.5,296.5 L218.6,296.7 L217.7,296.9 L216.8,297.0 L215.9,297.2 L215.0,297.4 L214.1,297.6 L213.2,297.7 L212.3,297.9 L211.4,298.1 L210.5,298.2 L209.6,298.4 L208.7,298.5 L207.8,298.7 L206.9,298.8 L206.0,298.9 L205.0,299.0 L204.1,299.1 L203.2,299.2 L202.3,299.3 L201.4,299.3 L200.5,299.4 L199.5,299.5 L198.6,299.6 L197.7,299.7 L196.8,299.7 L195.9,299.8 L195.0,299.9 L194.1,299.9 L193.1,300.0 L192.2,300.0 L191.3,300.1 L190.4,300.1 L189.5,300.2 L188.6,300.2 L187.7,300.2 L186.7,300.2 L185.8,300.2 L184.9,300.2 L184.0,300.0 Z" fill="#fdfaf3"/>
<ellipse cx="184" cy="311" rx="7.5" ry="2.7" fill="#fdfaf3"/>
<line x1="187.2" y1="174" x2="187.6" y2="309.2" stroke="#f3e2c9" stroke-width="2.9" stroke-linecap="round"/>
<line x1="187.2" y1="174" x2="187.6" y2="309.2" stroke="#262430" stroke-width="2.0" stroke-linecap="round"/>
<path d="M148.6,226.0 C150.1,224.4 154.6,226.5 158.0,226.5 C161.4,226.5 167.1,224.4 168.8,226.0 C170.5,227.6 168.7,232.7 168.0,236.0 C167.3,239.3 166.1,244.7 164.5,246.0 C162.9,247.3 160.5,244.0 158.5,244.0 C156.5,244.0 154.1,247.3 152.5,246.0 C150.9,244.7 149.5,239.3 148.8,236.0 C148.2,232.7 147.1,227.6 148.6,226.0 Z" fill="#f3e2c9" stroke="#f3e2c9" stroke-width="1.5" stroke-linejoin="round"/>
<path d="M148.9,231.4 L148.0,256.7 L153.0,257.3 L158.3,232.6 Z" fill="#f3e2c9" stroke="#f3e2c9" stroke-width="1.5" stroke-linejoin="round"/>
<path d="M148.1,256.5 L141.8,289.7 L144.6,290.3 L152.9,257.5 Z" fill="#f3e2c9" stroke="#f3e2c9" stroke-width="1.5" stroke-linejoin="round"/>
<path d="M159.5,231.5 L158.7,256.7 L163.7,257.3 L168.5,232.5 Z" fill="#f3e2c9" stroke="#f3e2c9" stroke-width="1.5" stroke-linejoin="round"/>
<path d="M158.7,256.7 L155.6,289.8 L158.4,290.2 L163.7,257.3 Z" fill="#f3e2c9" stroke="#f3e2c9" stroke-width="1.5" stroke-linejoin="round"/>
<path d="M167.0,200.0 L177.8,210.5 L186.5,188.7" fill="none" stroke="#f3e2c9" stroke-width="4.7" stroke-linecap="round" stroke-linejoin="round"/>
<path d="M167.5,216.0 L172.5,221.8 L187.5,214.8" fill="none" stroke="#f3e2c9" stroke-width="4.7" stroke-linecap="round" stroke-linejoin="round"/>
<path d="M148.8,223.0 C150.5,222.2 155.2,223.6 158.5,223.6 C161.8,223.6 167.2,222.0 168.8,222.8 C170.5,223.6 169.4,227.2 168.4,228.5 C167.4,229.8 165.0,229.8 163.0,230.5 C161.0,231.2 158.3,232.7 156.5,232.6 C154.7,232.5 153.3,230.7 152.0,230.0 C150.7,229.3 148.9,229.7 148.4,228.5 C147.9,227.3 147.1,223.8 148.8,223.0 Z" fill="#f3e2c9" stroke="#f3e2c9" stroke-width="1.5" stroke-linejoin="round"/>
<path d="M153.6,199.2 C154.7,197.6 155.8,197.2 157.5,196.8 C159.2,196.4 161.9,196.2 163.5,196.6 C165.1,197.0 166.3,197.5 167.2,199.0 C168.1,200.5 168.8,202.7 168.8,205.5 C168.8,208.3 167.3,213.1 167.3,216.1 C167.3,219.1 170.4,222.2 168.8,223.5 C167.2,224.8 161.4,223.8 158.0,223.8 C154.6,223.8 149.4,224.8 148.6,223.5 C147.8,222.2 152.8,218.9 153.2,216.1 C153.6,213.3 150.9,209.3 151.0,206.5 C151.1,203.7 152.5,200.8 153.6,199.2 Z" fill="#f3e2c9" stroke="#f3e2c9" stroke-width="1.5" stroke-linejoin="round"/>
<path d="M158.0,186.0 C159.2,184.2 164.5,183.4 165.8,184.2 C167.1,185.0 166.0,189.1 165.6,191.0 C165.2,192.9 164.4,195.1 163.2,195.8 C162.0,196.5 159.2,196.8 158.3,195.2 C157.4,193.6 156.8,187.8 158.0,186.0 Z" fill="#f3e2c9" stroke="#f3e2c9" stroke-width="1.5" stroke-linejoin="round"/>
<path d="M155.6,181.6 C156.1,179.2 158.1,177.1 159.6,176.4 C161.1,175.7 163.6,176.0 164.6,177.2 C165.6,178.4 166.1,182.3 165.6,183.6 C165.1,184.9 162.9,184.2 161.8,185.0 C160.7,185.8 160.1,187.7 159.2,188.6 C158.3,189.5 157.0,191.8 156.4,190.6 C155.8,189.4 155.1,184.0 155.6,181.6 Z" fill="#f3e2c9" stroke="#f3e2c9" stroke-width="1.5" stroke-linejoin="round"/>
<path d="M147.8,183.6 C148.1,182.0 149.4,180.2 150.6,179.8 C151.8,179.4 154.1,180.2 155.2,181.2 C156.3,182.2 157.2,184.2 157.2,185.6 C157.2,187.0 156.1,189.4 155.2,189.6 C154.3,189.8 152.8,186.6 151.8,186.6 C150.8,186.6 149.7,189.9 149.0,189.4 C148.3,188.9 147.5,185.2 147.8,183.6 Z" fill="#f3e2c9" stroke="#f3e2c9" stroke-width="1.5" stroke-linejoin="round"/>
<path d="M184.8,189.6 a2.4,3.2 0 1,0 4.8,0 a2.4,3.2 0 1,0 -4.8,0 Z" fill="#f3e2c9" stroke="#f3e2c9" stroke-width="1.5" stroke-linejoin="round"/>
<path d="M185.2,214.6 a2.4,3.0 0 1,0 4.8,0 a2.4,3.0 0 1,0 -4.8,0 Z" fill="#f3e2c9" stroke="#f3e2c9" stroke-width="1.5" stroke-linejoin="round"/>
<path d="M148.6,226.0 C150.1,224.4 154.6,226.5 158.0,226.5 C161.4,226.5 167.1,224.4 168.8,226.0 C170.5,227.6 168.7,232.7 168.0,236.0 C167.3,239.3 166.1,244.7 164.5,246.0 C162.9,247.3 160.5,244.0 158.5,244.0 C156.5,244.0 154.1,247.3 152.5,246.0 C150.9,244.7 149.5,239.3 148.8,236.0 C148.2,232.7 147.1,227.6 148.6,226.0 Z" fill="#c46e86"/>
<path d="M148.9,231.4 L148.0,256.7 L153.0,257.3 L158.3,232.6 Z" fill="#c46e86"/>
<path d="M148.1,256.5 L141.8,289.7 L144.6,290.3 L152.9,257.5 Z" fill="#c46e86"/>
<path d="M159.5,231.5 L158.7,256.7 L163.7,257.3 L168.5,232.5 Z" fill="#c46e86"/>
<path d="M158.7,256.7 L155.6,289.8 L158.4,290.2 L163.7,257.3 Z" fill="#c46e86"/>
<path d="M167.0,200.0 L177.8,210.5 L186.5,188.7" fill="none" stroke="#c46e86" stroke-width="3.2" stroke-linecap="round" stroke-linejoin="round"/>
<path d="M167.5,216.0 L172.5,221.8 L187.5,214.8" fill="none" stroke="#c46e86" stroke-width="3.2" stroke-linecap="round" stroke-linejoin="round"/>
<path d="M148.8,223.0 C150.5,222.2 155.2,223.6 158.5,223.6 C161.8,223.6 167.2,222.0 168.8,222.8 C170.5,223.6 169.4,227.2 168.4,228.5 C167.4,229.8 165.0,229.8 163.0,230.5 C161.0,231.2 158.3,232.7 156.5,232.6 C154.7,232.5 153.3,230.7 152.0,230.0 C150.7,229.3 148.9,229.7 148.4,228.5 C147.9,227.3 147.1,223.8 148.8,223.0 Z" fill="#2a2735"/>
<path d="M153.6,199.2 C154.7,197.6 155.8,197.2 157.5,196.8 C159.2,196.4 161.9,196.2 163.5,196.6 C165.1,197.0 166.3,197.5 167.2,199.0 C168.1,200.5 168.8,202.7 168.8,205.5 C168.8,208.3 167.3,213.1 167.3,216.1 C167.3,219.1 170.4,222.2 168.8,223.5 C167.2,224.8 161.4,223.8 158.0,223.8 C154.6,223.8 149.4,224.8 148.6,223.5 C147.8,222.2 152.8,218.9 153.2,216.1 C153.6,213.3 150.9,209.3 151.0,206.5 C151.1,203.7 152.5,200.8 153.6,199.2 Z" fill="#c46e86"/>
<path d="M151.8,205.0 L166.8,205.8 L166.6,208.9 L151.8,208.4 Z" fill="#2a2735"/>
<path d="M158.0,186.0 C159.2,184.2 164.5,183.4 165.8,184.2 C167.1,185.0 166.0,189.1 165.6,191.0 C165.2,192.9 164.4,195.1 163.2,195.8 C162.0,196.5 159.2,196.8 158.3,195.2 C157.4,193.6 156.8,187.8 158.0,186.0 Z" fill="#c46e86"/>
<path d="M155.6,181.6 C156.1,179.2 158.1,177.1 159.6,176.4 C161.1,175.7 163.6,176.0 164.6,177.2 C165.6,178.4 166.1,182.3 165.6,183.6 C165.1,184.9 162.9,184.2 161.8,185.0 C160.7,185.8 160.1,187.7 159.2,188.6 C158.3,189.5 157.0,191.8 156.4,190.6 C155.8,189.4 155.1,184.0 155.6,181.6 Z" fill="#2a2735"/>
<path d="M147.8,183.6 C148.1,182.0 149.4,180.2 150.6,179.8 C151.8,179.4 154.1,180.2 155.2,181.2 C156.3,182.2 157.2,184.2 157.2,185.6 C157.2,187.0 156.1,189.4 155.2,189.6 C154.3,189.8 152.8,186.6 151.8,186.6 C150.8,186.6 149.7,189.9 149.0,189.4 C148.3,188.9 147.5,185.2 147.8,183.6 Z" fill="#2a2735"/>
<path d="M184.8,189.6 a2.4,3.2 0 1,0 4.8,0 a2.4,3.2 0 1,0 -4.8,0 Z" fill="#c46e86"/>
<path d="M185.2,214.6 a2.4,3.0 0 1,0 4.8,0 a2.4,3.0 0 1,0 -4.8,0 Z" fill="#c46e86"/>
</g>
<g id="props">
<rect x="529" y="25" width="191" height="255" fill="#535353"/>
<rect x="529" y="25" width="191" height="10" fill="#3e3e3e"/>
<rect x="529" y="25" width="42" height="10" fill="#535353"/>
<text x="533.7" y="32.5" font-size="6.7" font-weight="bold" fill="#fff" stroke="#fff" stroke-width="0.2">Properties</text>
<text x="575.8" y="32.5" font-size="7.2" fill="#d0d0d0" stroke="#d0d0d0" stroke-width="0.2">Library</text>
<rect x="709.5" y="27.8" width="7" height="5.2" fill="#8c8c8c"/>
<rect x="709.5" y="29.4" width="7" height="0.6" fill="#5a5a5a"/>
<rect x="709.5" y="31.0" width="7" height="0.6" fill="#5a5a5a"/>
<!-- symbol icon -->
<path d="M547.1,55.4 L553.6,50.0 L554.6,51.6 L551.4,54.0 L551.6,52.8 L557.3,52.6 L557.3,57.2 L554.2,58.8 L550.6,58.6 Z" fill="#f2f2f2"/>
<path d="M549.2,55.2 L553.4,51.6" stroke="#777" stroke-width="0.6"/>
<circle cx="552.1" cy="56.2" r="1.5" fill="#111"/>
<!-- Graphic dropdown -->
<rect x="576" y="57.5" width="126" height="12.3" fill="#494949"/>
<text x="580.2" y="66.1" font-size="7.5" fill="#fff" stroke="#fff" stroke-width="0.2">Graphic</text>
<path d="M692.6,61.6 L695,63.8 L697.4,61.6" fill="none" stroke="#fff" stroke-width="1.2"/>
<!-- instance -->
<text x="532.8" y="84.7" font-size="7.5" fill="#d6d6d6" stroke="#d6d6d6" stroke-width="0.2">Instance of:</text>
<rect x="575.8" y="75.8" width="85" height="12.6" fill="#4d4d4d" stroke="#666" stroke-width="0.8"/>
<text x="580.7" y="84.2" font-size="7.5" fill="#fff" stroke="#fff" stroke-width="0.2">Pig_Ear_1</text>
<rect x="664.2" y="75.8" width="36.8" height="11.6" fill="#535353" stroke="#6a6a6a" stroke-width="0.8"/>
<text x="670.4" y="84.3" font-size="7.5" fill="#f0f0f0" stroke="#f0f0f0" stroke-width="0.2">Swap...</text>
<!-- dividers -->
<rect x="529" y="106" width="191" height="1" fill="#454545"/>
<rect x="529" y="156.6" width="191" height="1" fill="#454545"/>
<rect x="529" y="191.2" width="191" height="1" fill="#454545"/>
<!-- Position and size -->
<path d="M532.2,110.9 L538,110.9 L535.1,114.5 Z" fill="#eee"/>
<text x="541.7" y="115.4" font-size="7.5" fill="#dcdcdc" stroke="#dcdcdc" stroke-width="0.2">Position and Size</text>
<text x="572" y="130.7" font-size="7.5" fill="#d6d6d6" stroke="#d6d6d6" stroke-width="0.2" text-anchor="end">X:</text>
<text x="577.2" y="130.7" font-size="7.5" fill="#fff" stroke="#fff" stroke-width="0.2">56.35</text>
<rect x="577.2" y="132.3" width="19.5" height="0.6" fill="#bbb"/>
<text x="648" y="130.7" font-size="7.5" fill="#d6d6d6" stroke="#d6d6d6" stroke-width="0.2" text-anchor="end">Y:</text>
<text x="652" y="130.7" font-size="7.5" fill="#fff" stroke="#fff" stroke-width="0.2">-333.80</text>
<rect x="652" y="132.3" width="29" height="0.6" fill="#bbb"/>
<text x="572" y="149.2" font-size="7.5" fill="#d6d6d6" stroke="#d6d6d6" stroke-width="0.2" text-anchor="end">W:</text>
<text x="577.2" y="149.2" font-size="7.5" fill="#fff" stroke="#fff" stroke-width="0.2">84.55</text>
<rect x="577.2" y="150.8" width="19.5" height="0.6" fill="#bbb"/>
<text x="648" y="149.2" font-size="7.5" fill="#d6d6d6" stroke="#d6d6d6" stroke-width="0.2" text-anchor="end">H:</text>
<text x="652" y="149.2" font-size="7.5" fill="#fff" stroke="#fff" stroke-width="0.2">239.20</text>
<g fill="none" stroke="#e6e6e6" stroke-width="0.9"><ellipse cx="534.4" cy="147" rx="2.2" ry="1.8"/><ellipse cx="539.2" cy="147" rx="2.2" ry="1.8"/></g>
<!-- Color effect -->
<path d="M532.2,161.9 L538,161.9 L535.1,165.5 Z" fill="#eee"/>
<text x="541.7" y="166.3" font-size="7.5" fill="#dcdcdc" stroke="#dcdcdc" stroke-width="0.2">Color Effect</text>
<text x="572" y="181.3" font-size="7.5" fill="#d6d6d6" stroke="#d6d6d6" stroke-width="0.2" text-anchor="end">Style:</text>
<rect x="577" y="174.3" width="86.5" height="8.8" fill="#494949"/>
<text x="580.6" y="181.3" font-size="7.5" fill="#fff" stroke="#fff" stroke-width="0.2">None</text>
<path d="M656.4,177.2 L658.6,179.2 L660.8,177.2" fill="none" stroke="#fff" stroke-width="1.1"/>
<!-- Looping -->
<path d="M532.2,196 L538,196 L535.1,199.6 Z" fill="#eee"/>
<text x="541.7" y="200.4" font-size="7.5" fill="#dcdcdc" stroke="#dcdcdc" stroke-width="0.2">Looping</text>
<text x="571.5" y="215.2" font-size="7.5" fill="#d6d6d6" stroke="#d6d6d6" stroke-width="0.2" text-anchor="end">Options:</text>
<rect x="578" y="208" width="119.4" height="8.8" fill="#494949"/>
<text x="582.4" y="215.2" font-size="7.5" fill="#fff" stroke="#fff" stroke-width="0.2">Loop</text>
<path d="M689.8,211.2 L692,213.2 L694.2,211.2" fill="none" stroke="#fff" stroke-width="1.1"/>
<text x="571.5" y="230.9" font-size="7.5" fill="#d6d6d6" stroke="#d6d6d6" stroke-width="0.2" text-anchor="end">First:</text>
<text x="578.5" y="230.9" font-size="7.5" fill="#fff" stroke="#fff" stroke-width="0.2">1</text>
<rect x="578.5" y="232.5" width="4.2" height="0.6" fill="#bbb"/>
<rect x="529" y="279.2" width="191" height="0.9" fill="#3a3734"/>
<rect x="529" y="25" width="0.8" height="255" fill="#4a4846"/>
<rect x="529" y="25" width="191" height="0.7" fill="#2e2e2e"/>
<!-- buttons -->
<rect x="579.3" y="239.5" width="119.5" height="10.8" rx="1" fill="#4f4f4f" stroke="#6e6e6e" stroke-width="0.8"/>
<text x="639" y="247.8" font-size="6.8" font-weight="bold" fill="#fff" stroke="#fff" stroke-width="0.2" text-anchor="middle">Use Frame Picker...</text>
<rect x="579.3" y="256.3" width="119.5" height="10.8" rx="1" fill="#4f4f4f" stroke="#6e6e6e" stroke-width="0.8"/>
<text x="638.5" y="264.9" font-size="6.8" font-weight="bold" fill="#fff" stroke="#fff" stroke-width="0.2" text-anchor="middle">Lip Syncing...</text>
</g>

<g id="timeline">
<rect x="0" y="334" width="648" height="126" fill="#535353"/>
<rect x="0" y="334" width="648" height="11" fill="#3e3e3e"/>
<rect x="0" y="334" width="37.3" height="11" fill="#535353"/>
<rect x="0" y="334" width="648" height="0.8" fill="#2a2a2a"/>
<text x="5.3" y="342.4" font-size="6.5" font-weight="bold" fill="#fff" stroke="#fff" stroke-width="0.2">Timeline</text>
<text x="41.4" y="342.4" font-size="7.5" fill="#d0d0d0" stroke="#d0d0d0" stroke-width="0.2">Output</text>
<rect x="635.5" y="338.3" width="7" height="4" fill="#8c8c8c"/><rect x="635.5" y="339.6" width="7" height="0.5" fill="#5a5a5a"/><rect x="635.5" y="340.9" width="7" height="0.5" fill="#5a5a5a"/>
<rect x="0" y="345" width="1" height="115" fill="#646464"/>
<path d="M7.3,352 L14.6,352 L14.6,357.9 L9.5,357.9 L7.3,355.5 Z" fill="#d6d6d6" stroke="#2e2e2e" stroke-width="0.6"/>
<path d="M21.7,353 L24.5,353 L25.3,354 L29.6,354 L29.6,358.3 L21.7,358.3 Z" fill="#d6d6d6" stroke="#2e2e2e" stroke-width="0.6"/>
<path d="M36.7,351.6 L44.6,351.6 M37.6,352.6 L43.8,352.6 L43.3,358.7 L38.1,358.7 Z" fill="#cfcfcf" stroke="#cfcfcf" stroke-width="0.8"/>
<rect x="39.2" y="353.8" width="0.6" height="4" fill="#777"/><rect x="41.4" y="353.8" width="0.6" height="4" fill="#777"/>
<g fill="#7a7a7a"><rect x="123.6" y="353" width="5" height="4.6"/><path d="M129.2,355.3 L131.7,353 L131.7,357.6 Z"/></g>
<rect x="139" y="350.3" width="11.8" height="10.3" rx="1.5" fill="#262626"/>
<g fill="#f2f2f2"><rect x="143" y="351.5" width="3.8" height="2.6"/><rect x="140.3" y="357" width="3.6" height="2.6"/><rect x="145.9" y="357" width="3.6" height="2.6"/><path d="M144.9,354 L142.1,357 M144.9,354 L147.7,357" stroke="#f2f2f2" stroke-width="0.9"/></g>
<path d="M158.2,351.8 L158.2,358.6 L166.5,358.6" fill="none" stroke="#d0d0d0" stroke-width="0.9"/><path d="M159.5,357.5 L161.5,355 L163.3,356.4 L165.8,353.5" fill="none" stroke="#d0d0d0" stroke-width="0.9"/>
<rect x="175" y="363.6" width="470" height="0.6" fill="#4a4a4a"/>
<rect x="106.3" y="374.3" width="3.8" height="6.2" fill="none" stroke="#333" stroke-width="0.8"/>
<path d="M152.3,377.3 Q156.4,373.3 160.6,377.3 Q156.4,381.3 152.3,377.3 Z" fill="#f2f2f2"/><circle cx="156.4" cy="377.3" r="1.3" fill="#333"/>
<path d="M166.6,376 L166.6,374.6 Q168.7,371.8 170.8,374.6 L170.8,376" fill="none" stroke="#f2f2f2" stroke-width="1"/><rect x="165.2" y="375.8" width="7.2" height="5" rx="0.6" fill="#f2f2f2"/><rect x="168.3" y="377.6" width="1" height="1.8" fill="#444"/>
<rect x="174.8" y="345" width="0.8" height="102" fill="#3c3c3c"/>
<rect x="1" y="384.30" width="103" height="10.45" fill="#4b4b4b"/>
<rect x="104" y="384.30" width="47" height="10.45" fill="#434343"/>
<rect x="151" y="384.30" width="23.8" height="10.45" fill="#4b4b4b"/>
<rect x="1" y="394.15" width="174" height="0.8" fill="#585858"/>
<path d="M16.3,385.72 L23.6,385.72 L23.6,393.12 L18.6,393.12 L16.3,390.82 Z" fill="none" stroke="#e0e0e0" stroke-width="0.9"/>
<rect x="19.6" y="387.72" width="2.6" height="3.2" fill="none" stroke="#e0e0e0" stroke-width="0.7"/>
<text x="26.5" y="392.12" font-size="7.5" fill="#f2f2f2" stroke="#f2f2f2" stroke-width="0.2">Pig_torso</text>
<circle cx="156.5" cy="389.52" r="1.2" fill="#000"/><circle cx="169.6" cy="389.52" r="1.2" fill="#000"/>
<rect x="1" y="394.75" width="103" height="10.45" fill="#4b4b4b"/>
<rect x="104" y="394.75" width="47" height="10.45" fill="#434343"/>
<rect x="151" y="394.75" width="23.8" height="10.45" fill="#4b4b4b"/>
<rect x="1" y="404.60" width="174" height="0.8" fill="#585858"/>
<path d="M16.3,396.18 L23.6,396.18 L23.6,403.58 L18.6,403.58 L16.3,401.28 Z" fill="none" stroke="#e0e0e0" stroke-width="0.9"/>
<rect x="19.6" y="398.18" width="2.6" height="3.2" fill="none" stroke="#e0e0e0" stroke-width="0.7"/>
<text x="26.5" y="402.58" font-size="7.5" fill="#f2f2f2" stroke="#f2f2f2" stroke-width="0.2">Pig_tail</text>
<circle cx="156.5" cy="399.98" r="1.2" fill="#000"/><circle cx="169.6" cy="399.98" r="1.2" fill="#000"/>
<rect x="1" y="405.20" width="103" height="10.45" fill="#4b4b4b"/>
<rect x="104" y="405.20" width="47" height="10.45" fill="#434343"/>
<rect x="151" y="405.20" width="23.8" height="10.45" fill="#4b4b4b"/>
<rect x="1" y="415.05" width="174" height="0.8" fill="#585858"/>
<path d="M16.3,406.62 L23.6,406.62 L23.6,414.02 L18.6,414.02 L16.3,411.72 Z" fill="none" stroke="#e0e0e0" stroke-width="0.9"/>
<rect x="19.6" y="408.62" width="2.6" height="3.2" fill="none" stroke="#e0e0e0" stroke-width="0.7"/>
<text x="26.5" y="413.02" font-size="7.5" fill="#f2f2f2" stroke="#f2f2f2" stroke-width="0.2">Pig_leg</text>
<circle cx="156.5" cy="410.42" r="1.2" fill="#000"/><circle cx="169.6" cy="410.42" r="1.2" fill="#000"/>
<rect x="1" y="415.65" width="103" height="10.45" fill="#4b4b4b"/>
<rect x="104" y="415.65" width="47" height="10.45" fill="#434343"/>
<rect x="151" y="415.65" width="23.8" height="10.45" fill="#4b4b4b"/>
<rect x="1" y="425.50" width="174" height="0.8" fill="#585858"/>
<path d="M16.3,417.07 L23.6,417.07 L23.6,424.48 L18.6,424.48 L16.3,422.18 Z" fill="none" stroke="#e0e0e0" stroke-width="0.9"/>
<rect x="19.6" y="419.07" width="2.6" height="3.2" fill="none" stroke="#e0e0e0" stroke-width="0.7"/>
<text x="26.5" y="423.48" font-size="7.5" fill="#f2f2f2" stroke="#f2f2f2" stroke-width="0.2">Pig_Ear_2</text>
<circle cx="156.5" cy="420.88" r="1.2" fill="#000"/><circle cx="169.6" cy="420.88" r="1.2" fill="#000"/>
<rect x="1" y="426.10" width="103" height="10.45" fill="#3c6bb0"/>
<rect x="104" y="426.10" width="47" height="10.45" fill="#434343"/>
<rect x="151" y="426.10" width="23.8" height="10.45" fill="#3c6bb0"/>
<rect x="1" y="435.95" width="174" height="0.8" fill="#585858"/>
<path d="M16.3,427.53 L23.6,427.53 L23.6,434.93 L18.6,434.93 L16.3,432.63 Z" fill="none" stroke="#e0e0e0" stroke-width="0.9"/>
<rect x="19.6" y="429.53" width="2.6" height="3.2" fill="none" stroke="#e0e0e0" stroke-width="0.7"/>
<text x="26.5" y="433.93" font-size="7.5" fill="#f2f2f2" stroke="#f2f2f2" stroke-width="0.2">Pig_Ear_1</text>
<circle cx="156.5" cy="431.33" r="1.2" fill="#fff"/><circle cx="169.6" cy="431.33" r="1.2" fill="#fff"/>
<rect x="1" y="436.55" width="103" height="10.45" fill="#4b4b4b"/>
<rect x="104" y="436.55" width="47" height="10.45" fill="#434343"/>
<rect x="151" y="436.55" width="23.8" height="10.45" fill="#4b4b4b"/>
<rect x="1" y="446.40" width="174" height="0.8" fill="#585858"/>
<path d="M16.3,437.97 L23.6,437.97 L23.6,445.38 L18.6,445.38 L16.3,443.07 Z" fill="none" stroke="#e0e0e0" stroke-width="0.9"/>
<rect x="19.6" y="439.97" width="2.6" height="3.2" fill="none" stroke="#e0e0e0" stroke-width="0.7"/>
<text x="26.5" y="444.38" font-size="7.5" fill="#f2f2f2" stroke="#f2f2f2" stroke-width="0.2">Pig_Arm</text>
<circle cx="156.5" cy="441.77" r="1.2" fill="#000"/><circle cx="169.6" cy="441.77" r="1.2" fill="#000"/>
<path d="M105.8,385.6 L109.8,385.6 L109.8,393 L105.8,393 Z" fill="#1ba59a"/>
<path d="M109.5,389.5 L114,386" stroke="#1ba59a" stroke-width="1.6" fill="none"/>
<path d="M110,389.5 Q118,390 118,396.95 Q118.5,399.95 125,399.95" stroke="#1ba59a" stroke-width="0.9" fill="none"/>
<rect x="125.6" y="396.95" width="3.6" height="6" fill="#d8172b"/>
<path d="M110,389.5 Q118,390 118,407.40 Q118.5,410.40 125,410.40" stroke="#1ba59a" stroke-width="0.9" fill="none"/>
<rect x="125.6" y="407.40" width="3.6" height="6" fill="#7fae22"/>
<path d="M110,389.5 Q118,390 118,417.85 Q118.5,420.85 125,420.85" stroke="#1ba59a" stroke-width="0.9" fill="none"/>
<rect x="125.6" y="417.85" width="3.6" height="6" fill="#e8645a"/>
<path d="M110,389.5 Q118,390 118,428.30 Q118.5,431.30 125,431.30" stroke="#1ba59a" stroke-width="0.9" fill="none"/>
<rect x="125.3" y="427.90" width="4.4" height="6.8" fill="#2be5f0" stroke="#fff" stroke-width="0.6"/>
<path d="M110,389.5 Q118,390 118,438.75 Q118.5,441.75 125,441.75" stroke="#1ba59a" stroke-width="0.9" fill="none"/>
<rect x="125.6" y="438.75" width="3.6" height="6" fill="#9a4fd0"/>
<rect x="175.5" y="384.3" width="461.70" height="62.7" fill="#525252"/>
<rect x="177.10" y="384.3" width="1.6" height="62.7" fill="#4c4c4c"/>
<rect x="175.10" y="384.3" width="0.9" height="62.7" fill="#5e5e5e"/>
<rect x="182.17" y="384.3" width="1.6" height="62.7" fill="#4c4c4c"/>
<rect x="180.17" y="384.3" width="0.9" height="62.7" fill="#5e5e5e"/>
<rect x="187.24" y="384.3" width="1.6" height="62.7" fill="#4c4c4c"/>
<rect x="185.24" y="384.3" width="0.9" height="62.7" fill="#5e5e5e"/>
<rect x="192.30" y="384.3" width="1.6" height="62.7" fill="#4c4c4c"/>
<rect x="190.30" y="384.3" width="0.9" height="62.7" fill="#5e5e5e"/>
<rect x="197.37" y="384.3" width="1.6" height="62.7" fill="#4c4c4c"/>
<rect x="195.37" y="384.3" width="0.9" height="62.7" fill="#5e5e5e"/>
<rect x="202.44" y="384.3" width="1.6" height="62.7" fill="#4c4c4c"/>
<rect x="200.44" y="384.3" width="0.9" height="62.7" fill="#5e5e5e"/>
<rect x="207.51" y="384.3" width="1.6" height="62.7" fill="#4c4c4c"/>
<rect x="205.51" y="384.3" width="0.9" height="62.7" fill="#5e5e5e"/>
<rect x="212.58" y="384.3" width="1.6" height="62.7" fill="#4c4c4c"/>
<rect x="210.58" y="384.3" width="0.9" height="62.7" fill="#5e5e5e"/>
<rect x="217.64" y="384.3" width="1.6" height="62.7" fill="#4c4c4c"/>
<rect x="215.64" y="384.3" width="0.9" height="62.7" fill="#5e5e5e"/>
<rect x="222.71" y="384.3" width="1.6" height="62.7" fill="#4c4c4c"/>
<rect x="220.71" y="384.3" width="0.9" height="62.7" fill="#5e5e5e"/>
<rect x="227.78" y="384.3" width="1.6" height="62.7" fill="#4c4c4c"/>
<rect x="225.78" y="384.3" width="0.9" height="62.7" fill="#5e5e5e"/>
<rect x="232.85" y="384.3" width="1.6" height="62.7" fill="#4c4c4c"/>
<rect x="230.85" y="384.3" width="0.9" height="62.7" fill="#5e5e5e"/>
<rect x="237.92" y="384.3" width="1.6" height="62.7" fill="#4c4c4c"/>
<rect x="235.92" y="384.3" width="0.9" height="62.7" fill="#5e5e5e"/>
<rect x="242.98" y="384.3" width="1.6" height="62.7" fill="#4c4c4c"/>
<rect x="240.98" y="384.3" width="0.9" height="62.7" fill="#5e5e5e"/>
<rect x="248.05" y="384.3" width="1.6" height="62.7" fill="#4c4c4c"/>
<rect x="246.05" y="384.3" width="0.9" height="62.7" fill="#5e5e5e"/>
<rect x="253.12" y="384.3" width="1.6" height="62.7" fill="#4c4c4c"/>
<rect x="251.12" y="384.3" width="0.9" height="62.7" fill="#5e5e5e"/>
<rect x="258.19" y="384.3" width="1.6" height="62.7" fill="#4c4c4c"/>
<rect x="256.19" y="384.3" width="0.9" height="62.7" fill="#5e5e5e"/>
<rect x="263.26" y="384.3" width="1.6" height="62.7" fill="#4c4c4c"/>
<rect x="261.26" y="384.3" width="0.9" height="62.7" fill="#5e5e5e"/>
<rect x="268.32" y="384.3" width="1.6" height="62.7" fill="#4c4c4c"/>
<rect x="266.32" y="384.3" width="0.9" height="62.7" fill="#5e5e5e"/>
<rect x="273.39" y="384.3" width="1.6" height="62.7" fill="#4c4c4c"/>
<rect x="271.39" y="384.3" width="0.9" height="62.7" fill="#5e5e5e"/>
<rect x="278.46" y="384.3" width="1.6" height="62.7" fill="#4c4c4c"/>
<rect x="276.46" y="384.3" width="0.9" height="62.7" fill="#5e5e5e"/>
<rect x="283.53" y="384.3" width="1.6" height="62.7" fill="#4c4c4c"/>
<rect x="281.53" y="384.3" width="0.9" height="62.7" fill="#5e5e5e"/>
<rect x="288.60" y="384.3" width="1.6" height="62.7" fill="#4c4c4c"/>
<rect x="286.60" y="384.3" width="0.9" height="62.7" fill="#5e5e5e"/>
<rect x="293.66" y="384.3" width="1.6" height="62.7" fill="#4c4c4c"/>
<rect x="291.66" y="384.3" width="0.9" height="62.7" fill="#5e5e5e"/>
<rect x="298.73" y="384.3" width="1.6" height="62.7" fill="#4c4c4c"/>
<rect x="296.73" y="384.3" width="0.9" height="62.7" fill="#5e5e5e"/>
<rect x="303.80" y="384.3" width="1.6" height="62.7" fill="#4c4c4c"/>
<rect x="301.80" y="384.3" width="0.9" height="62.7" fill="#5e5e5e"/>
<rect x="308.87" y="384.3" width="1.6" height="62.7" fill="#4c4c4c"/>
<rect x="306.87" y="384.3" width="0.9" height="62.7" fill="#5e5e5e"/>
<rect x="313.94" y="384.3" width="1.6" height="62.7" fill="#4c4c4c"/>
<rect x="311.94" y="384.3" width="0.9" height="62.7" fill="#5e5e5e"/>
<rect x="319.00" y="384.3" width="1.6" height="62.7" fill="#4c4c4c"/>
<rect x="317.00" y="384.3" width="0.9" height="62.7" fill="#5e5e5e"/>
<rect x="324.07" y="384.3" width="1.6" height="62.7" fill="#4c4c4c"/>
<rect x="322.07" y="384.3" width="0.9" height="62.7" fill="#5e5e5e"/>
<rect x="329.14" y="384.3" width="1.6" height="62.7" fill="#4c4c4c"/>
<rect x="327.14" y="384.3" width="0.9" height="62.7" fill="#5e5e5e"/>
<rect x="334.21" y="384.3" width="1.6" height="62.7" fill="#4c4c4c"/>
<rect x="332.21" y="384.3" width="0.9" height="62.7" fill="#5e5e5e"/>
<rect x="339.28" y="384.3" width="1.6" height="62.7" fill="#4c4c4c"/>
<rect x="337.28" y="384.3" width="0.9" height="62.7" fill="#5e5e5e"/>
<rect x="344.34" y="384.3" width="1.6" height="62.7" fill="#4c4c4c"/>
<rect x="342.34" y="384.3" width="0.9" height="62.7" fill="#5e5e5e"/>
<rect x="349.41" y="384.3" width="1.6" height="62.7" fill="#4c4c4c"/>
<rect x="347.41" y="384.3" width="0.9" height="62.7" fill="#5e5e5e"/>
<rect x="354.48" y="384.3" width="1.6" height="62.7" fill="#4c4c4c"/>
<rect x="352.48" y="384.3" width="0.9" height="62.7" fill="#5e5e5e"/>
<rect x="359.55" y="384.3" width="1.6" height="62.7" fill="#4c4c4c"/>
<rect x="357.55" y="384.3" width="0.9" height="62.7" fill="#5e5e5e"/>
<rect x="364.62" y="384.3" width="1.6" height="62.7" fill="#4c4c4c"/>
<rect x="362.62" y="384.3" width="0.9" height="62.7" fill="#5e5e5e"/>
<rect x="369.68" y="384.3" width="1.6" height="62.7" fill="#4c4c4c"/>
<rect x="367.68" y="384.3" width="0.9" height="62.7" fill="#5e5e5e"/>
<rect x="374.75" y="384.3" width="1.6" height="62.7" fill="#4c4c4c"/>
<rect x="372.75" y="384.3" width="0.9" height="62.7" fill="#5e5e5e"/>
<rect x="379.82" y="384.3" width="1.6" height="62.7" fill="#4c4c4c"/>
<rect x="377.82" y="384.3" width="0.9" height="62.7" fill="#5e5e5e"/>
<rect x="384.89" y="384.3" width="1.6" height="62.7" fill="#4c4c4c"/>
<rect x="382.89" y="384.3" width="0.9" height="62.7" fill="#5e5e5e"/>
<rect x="389.96" y="384.3" width="1.6" height="62.7" fill="#4c4c4c"/>
<rect x="387.96" y="384.3" width="0.9" height="62.7" fill="#5e5e5e"/>
<rect x="395.02" y="384.3" width="1.6" height="62.7" fill="#4c4c4c"/>
<rect x="393.02" y="384.3" width="0.9" height="62.7" fill="#5e5e5e"/>
<rect x="400.09" y="384.3" width="1.6" height="62.7" fill="#4c4c4c"/>
<rect x="398.09" y="384.3" width="0.9" height="62.7" fill="#5e5e5e"/>
<rect x="405.16" y="384.3" width="1.6" height="62.7" fill="#4c4c4c"/>
<rect x="403.16" y="384.3" width="0.9" height="62.7" fill="#5e5e5e"/>
<rect x="410.23" y="384.3" width="1.6" height="62.7" fill="#4c4c4c"/>
<rect x="408.23" y="384.3" width="0.9" height="62.7" fill="#5e5e5e"/>
<rect x="415.30" y="384.3" width="1.6" height="62.7" fill="#4c4c4c"/>
<rect x="413.30" y="384.3" width="0.9" height="62.7" fill="#5e5e5e"/>
<rect x="420.36" y="384.3" width="1.6" height="62.7" fill="#4c4c4c"/>
<rect x="418.36" y="384.3" width="0.9" height="62.7" fill="#5e5e5e"/>
<rect x="425.43" y="384.3" width="1.6" height="62.7" fill="#4c4c4c"/>
<rect x="423.43" y="384.3" width="0.9" height="62.7" fill="#5e5e5e"/>
<rect x="430.50" y="384.3" width="1.6" height="62.7" fill="#4c4c4c"/>
<rect x="428.50" y="384.3" width="0.9" height="62.7" fill="#5e5e5e"/>
<rect x="435.57" y="384.3" width="1.6" height="62.7" fill="#4c4c4c"/>
<rect x="433.57" y="384.3" width="0.9" height="62.7" fill="#5e5e5e"/>
<rect x="440.64" y="384.3" width="1.6" height="62.7" fill="#4c4c4c"/>
<rect x="438.64" y="384.3" width="0.9" height="62.7" fill="#5e5e5e"/>
<rect x="445.70" y="384.3" width="1.6" height="62.7" fill="#4c4c4c"/>
<rect x="443.70" y="384.3" width="0.9" height="62.7" fill="#5e5e5e"/>
<rect x="450.77" y="384.3" width="1.6" height="62.7" fill="#4c4c4c"/>
<rect x="448.77" y="384.3" width="0.9" height="62.7" fill="#5e5e5e"/>
<rect x="455.84" y="384.3" width="1.6" height="62.7" fill="#4c4c4c"/>
<rect x="453.84" y="384.3" width="0.9" height="62.7" fill="#5e5e5e"/>
<rect x="460.91" y="384.3" width="1.6" height="62.7" fill="#4c4c4c"/>
<rect x="458.91" y="384.3" width="0.9" height="62.7" fill="#5e5e5e"/>
<rect x="465.98" y="384.3" width="1.6" height="62.7" fill="#4c4c4c"/>
<rect x="463.98" y="384.3" width="0.9" height="62.7" fill="#5e5e5e"/>
<rect x="471.04" y="384.3" width="1.6" height="62.7" fill="#4c4c4c"/>
<rect x="469.04" y="384.3" width="0.9" height="62.7" fill="#5e5e5e"/>
<rect x="476.11" y="384.3" width="1.6" height="62.7" fill="#4c4c4c"/>
<rect x="474.11" y="384.3" width="0.9" height="62.7" fill="#5e5e5e"/>
<rect x="481.18" y="384.3" width="1.6" height="62.7" fill="#4c4c4c"/>
<rect x="479.18" y="384.3" width="0.9" height="62.7" fill="#5e5e5e"/>
<rect x="486.25" y="384.3" width="1.6" height="62.7" fill="#4c4c4c"/>
<rect x="484.25" y="384.3" width="0.9" height="62.7" fill="#5e5e5e"/>
<rect x="491.32" y="384.3" width="1.6" height="62.7" fill="#4c4c4c"/>
<rect x="489.32" y="384.3" width="0.9" height="62.7" fill="#5e5e5e"/>
<rect x="496.38" y="384.3" width="1.6" height="62.7" fill="#4c4c4c"/>
<rect x="494.38" y="384.3" width="0.9" height="62.7" fill="#5e5e5e"/>
<rect x="501.45" y="384.3" width="1.6" height="62.7" fill="#4c4c4c"/>
<rect x="499.45" y="384.3" width="0.9" height="62.7" fill="#5e5e5e"/>
<rect x="506.52" y="384.3" width="1.6" height="62.7" fill="#4c4c4c"/>
<rect x="504.52" y="384.3" width="0.9" height="62.7" fill="#5e5e5e"/>
<rect x="511.59" y="384.3" width="1.6" height="62.7" fill="#4c4c4c"/>
<rect x="509.59" y="384.3" width="0.9" height="62.7" fill="#5e5e5e"/>
<rect x="516.66" y="384.3" width="1.6" height="62.7" fill="#4c4c4c"/>
<rect x="514.66" y="384.3" width="0.9" height="62.7" fill="#5e5e5e"/>
<rect x="521.72" y="384.3" width="1.6" height="62.7" fill="#4c4c4c"/>
<rect x="519.72" y="384.3" width="0.9" height="62.7" fill="#5e5e5e"/>
<rect x="526.79" y="384.3" width="1.6" height="62.7" fill="#4c4c4c"/>
<rect x="524.79" y="384.3" width="0.9" height="62.7" fill="#5e5e5e"/>
<rect x="531.86" y="384.3" width="1.6" height="62.7" fill="#4c4c4c"/>
<rect x="529.86" y="384.3" width="0.9" height="62.7" fill="#5e5e5e"/>
<rect x="536.93" y="384.3" width="1.6" height="62.7" fill="#4c4c4c"/>
<rect x="534.93" y="384.3" width="0.9" height="62.7" fill="#5e5e5e"/>
<rect x="542.00" y="384.3" width="1.6" height="62.7" fill="#4c4c4c"/>
<rect x="540.00" y="384.3" width="0.9" height="62.7" fill="#5e5e5e"/>
<rect x="547.06" y="384.3" width="1.6" height="62.7" fill="#4c4c4c"/>
<rect x="545.06" y="384.3" width="0.9" height="62.7" fill="#5e5e5e"/>
<rect x="552.13" y="384.3" width="1.6" height="62.7" fill="#4c4c4c"/>
<rect x="550.13" y="384.3" width="0.9" height="62.7" fill="#5e5e5e"/>
<rect x="557.20" y="384.3" width="1.6" height="62.7" fill="#4c4c4c"/>
<rect x="555.20" y="384.3" width="0.9" height="62.7" fill="#5e5e5e"/>
<rect x="562.27" y="384.3" width="1.6" height="62.7" fill="#4c4c4c"/>
<rect x="560.27" y="384.3" width="0.9" height="62.7" fill="#5e5e5e"/>
<rect x="567.34" y="384.3" width="1.6" height="62.7" fill="#4c4c4c"/>
<rect x="565.34" y="384.3" width="0.9" height="62.7" fill="#5e5e5e"/>
<rect x="572.40" y="384.3" width="1.6" height="62.7" fill="#4c4c4c"/>
<rect x="570.40" y="384.3" width="0.9" height="62.7" fill="#5e5e5e"/>
<rect x="577.47" y="384.3" width="1.6" height="62.7" fill="#4c4c4c"/>
<rect x="575.47" y="384.3" width="0.9" height="62.7" fill="#5e5e5e"/>
<rect x="582.54" y="384.3" width="1.6" height="62.7" fill="#4c4c4c"/>
<rect x="580.54" y="384.3" width="0.9" height="62.7" fill="#5e5e5e"/>
<rect x="587.61" y="384.3" width="1.6" height="62.7" fill="#4c4c4c"/>
<rect x="585.61" y="384.3" width="0.9" height="62.7" fill="#5e5e5e"/>
<rect x="592.68" y="384.3" width="1.6" height="62.7" fill="#4c4c4c"/>
<rect x="590.68" y="384.3" width="0.9" height="62.7" fill="#5e5e5e"/>
<rect x="597.74" y="384.3" width="1.6" height="62.7" fill="#4c4c4c"/>
<rect x="595.74" y="384.3" width="0.9" height="62.7" fill="#5e5e5e"/>
<rect x="602.81" y="384.3" width="1.6" height="62.7" fill="#4c4c4c"/>
<rect x="600.81" y="384.3" width="0.9" height="62.7" fill="#5e5e5e"/>
<rect x="607.88" y="384.3" width="1.6" height="62.7" fill="#4c4c4c"/>
<rect x="605.88" y="384.3" width="0.9" height="62.7" fill="#5e5e5e"/>
<rect x="612.95" y="384.3" width="1.6" height="62.7" fill="#4c4c4c"/>
<rect x="610.95" y="384.3" width="0.9" height="62.7" fill="#5e5e5e"/>
<rect x="618.02" y="384.3" width="1.6" height="62.7" fill="#4c4c4c"/>
<rect x="616.02" y="384.3" width="0.9" height="62.7" fill="#5e5e5e"/>
<rect x="623.08" y="384.3" width="1.6" height="62.7" fill="#4c4c4c"/>
<rect x="621.08" y="384.3" width="0.9" height="62.7" fill="#5e5e5e"/>
<rect x="628.15" y="384.3" width="1.6" height="62.7" fill="#4c4c4c"/>
<rect x="626.15" y="384.3" width="0.9" height="62.7" fill="#5e5e5e"/>
<rect x="633.22" y="384.3" width="1.6" height="62.7" fill="#4c4c4c"/>
<rect x="631.22" y="384.3" width="0.9" height="62.7" fill="#5e5e5e"/>
<rect x="638.29" y="384.3" width="1.6" height="62.7" fill="#4c4c4c"/>
<rect x="636.29" y="384.3" width="0.9" height="62.7" fill="#5e5e5e"/>
<rect x="175.5" y="394.25" width="461.70" height="0.9" fill="#5a5a5a"/>
<rect x="175.5" y="404.70" width="461.70" height="0.9" fill="#5a5a5a"/>
<rect x="175.5" y="415.15" width="461.70" height="0.9" fill="#5a5a5a"/>
<rect x="175.5" y="425.60" width="461.70" height="0.9" fill="#5a5a5a"/>
<rect x="175.5" y="436.05" width="461.70" height="0.9" fill="#5a5a5a"/>
<rect x="297.13" y="384.3" width="5.07" height="62.7" fill="#6a6a6a"/>
<rect x="175.50" y="384.30" width="121.63" height="10.45" fill="#835aab"/>
<rect x="175.50" y="394.05" width="121.63" height="0.7" fill="#7a55a0"/>
<rect x="178.50" y="391.00" width="115.63" height="0.8" fill="#62438a"/>
<path d="M293.63,390.20 L295.63,391.40 L293.63,392.60 Z" fill="#4a3270"/>
<circle cx="178.00" cy="391.40" r="1.6" fill="#000"/>
<circle cx="299.63" cy="391.40" r="1.6" fill="#000"/>
<rect x="175.50" y="394.75" width="121.63" height="10.45" fill="#835aab"/>
<rect x="175.50" y="404.50" width="121.63" height="0.7" fill="#7a55a0"/>
<rect x="178.50" y="401.45" width="115.63" height="0.8" fill="#62438a"/>
<path d="M293.63,400.65 L295.63,401.85 L293.63,403.05 Z" fill="#4a3270"/>
<circle cx="178.00" cy="401.85" r="1.6" fill="#000"/>
<circle cx="299.63" cy="401.85" r="1.6" fill="#000"/>
<rect x="175.50" y="405.20" width="121.63" height="10.45" fill="#835aab"/>
<rect x="175.50" y="414.95" width="121.63" height="0.7" fill="#7a55a0"/>
<rect x="178.50" y="411.90" width="115.63" height="0.8" fill="#62438a"/>
<path d="M293.63,411.10 L295.63,412.30 L293.63,413.50 Z" fill="#4a3270"/>
<circle cx="178.00" cy="412.30" r="1.6" fill="#000"/>
<circle cx="299.63" cy="412.30" r="1.6" fill="#000"/>
<rect x="175.50" y="415.65" width="121.63" height="10.45" fill="#835aab"/>
<rect x="175.50" y="425.40" width="121.63" height="0.7" fill="#7a55a0"/>
<rect x="178.50" y="422.35" width="115.63" height="0.8" fill="#62438a"/>
<path d="M293.63,421.55 L295.63,422.75 L293.63,423.95 Z" fill="#4a3270"/>
<circle cx="178.00" cy="422.75" r="1.6" fill="#000"/>
<circle cx="299.63" cy="422.75" r="1.6" fill="#000"/>
<circle cx="208.41" cy="422.75" r="1.5" fill="#000"/>
<circle cx="203.84" cy="422.75" r="0.6" fill="#000"/>
<rect x="175.50" y="426.10" width="121.63" height="10.45" fill="#835aab"/>
<rect x="175.50" y="435.85" width="121.63" height="0.7" fill="#7a55a0"/>
<rect x="210.98" y="426.40" width="85.66" height="9.55" fill="#5b77c8"/>
<rect x="295.53" y="427.60" width="1.1" height="7.45" fill="#f3dc6a"/>
<rect x="178.50" y="432.80" width="115.63" height="0.8" fill="#62438a"/>
<path d="M293.63,432.00 L295.63,433.20 L293.63,434.40 Z" fill="#4a3270"/>
<circle cx="178.00" cy="433.20" r="1.6" fill="#000"/>
<circle cx="299.63" cy="433.20" r="1.6" fill="#000"/>
<circle cx="208.41" cy="433.20" r="1.5" fill="#000"/>
<circle cx="203.84" cy="433.20" r="0.6" fill="#000"/>
<rect x="175.50" y="436.55" width="121.63" height="10.45" fill="#835aab"/>
<rect x="175.50" y="446.30" width="121.63" height="0.7" fill="#7a55a0"/>
<rect x="178.50" y="443.25" width="115.63" height="0.8" fill="#62438a"/>
<path d="M293.63,442.45 L295.63,443.65 L293.63,444.85 Z" fill="#4a3270"/>
<circle cx="178.00" cy="443.65" r="1.6" fill="#000"/>
<circle cx="299.63" cy="443.65" r="1.6" fill="#000"/>
<rect x="175" y="384.3" width="1" height="62.7" fill="#3c3c3c"/>
<rect x="205.11" y="364.6" width="6.6" height="19.4" fill="#8e3236"/>
<rect x="208.11" y="384" width="0.9" height="76" fill="#c42c4a"/>
<text x="175.90" y="381.6" font-size="7.3" fill="#e6e6e6" stroke="#e6e6e6" stroke-width="0.2">1</text>
<text x="196.17" y="381.6" font-size="7.3" fill="#e6e6e6" stroke="#e6e6e6" stroke-width="0.2">5</text>
<text x="221.51" y="381.6" font-size="7.3" fill="#e6e6e6" stroke="#e6e6e6" stroke-width="0.2">10</text>
<text x="246.85" y="381.6" font-size="7.3" fill="#e6e6e6" stroke="#e6e6e6" stroke-width="0.2">15</text>
<text x="272.19" y="381.6" font-size="7.3" fill="#e6e6e6" stroke="#e6e6e6" stroke-width="0.2">20</text>
<text x="297.53" y="381.6" font-size="7.3" fill="#e6e6e6" stroke="#e6e6e6" stroke-width="0.2">25</text>
<text x="322.87" y="381.6" font-size="7.3" fill="#e6e6e6" stroke="#e6e6e6" stroke-width="0.2">30</text>
<text x="348.21" y="381.6" font-size="7.3" fill="#e6e6e6" stroke="#e6e6e6" stroke-width="0.2">35</text>
<text x="373.55" y="381.6" font-size="7.3" fill="#e6e6e6" stroke="#e6e6e6" stroke-width="0.2">40</text>
<text x="398.89" y="381.6" font-size="7.3" fill="#e6e6e6" stroke="#e6e6e6" stroke-width="0.2">45</text>
<text x="424.23" y="381.6" font-size="7.3" fill="#e6e6e6" stroke="#e6e6e6" stroke-width="0.2">50</text>
<text x="449.57" y="381.6" font-size="7.3" fill="#e6e6e6" stroke="#e6e6e6" stroke-width="0.2">55</text>
<text x="474.91" y="381.6" font-size="7.3" fill="#e6e6e6" stroke="#e6e6e6" stroke-width="0.2">60</text>
<text x="500.25" y="381.6" font-size="7.3" fill="#e6e6e6" stroke="#e6e6e6" stroke-width="0.2">65</text>
<text x="525.59" y="381.6" font-size="7.3" fill="#e6e6e6" stroke="#e6e6e6" stroke-width="0.2">70</text>
<text x="550.93" y="381.6" font-size="7.3" fill="#e6e6e6" stroke="#e6e6e6" stroke-width="0.2">75</text>
<text x="576.27" y="381.6" font-size="7.3" fill="#e6e6e6" stroke="#e6e6e6" stroke-width="0.2">80</text>
<text x="601.61" y="381.6" font-size="7.3" fill="#e6e6e6" stroke="#e6e6e6" stroke-width="0.2">85</text>
<text x="626.95" y="381.6" font-size="7.3" fill="#e6e6e6" stroke="#e6e6e6" stroke-width="0.2">90</text>
<rect x="182.57" y="381.6" width="0.8" height="0.8" fill="#bdbdbd"/>
<rect x="187.64" y="381.6" width="0.8" height="0.8" fill="#bdbdbd"/>
<rect x="192.70" y="381.6" width="0.8" height="0.8" fill="#bdbdbd"/>
<rect x="202.84" y="381.6" width="0.8" height="0.8" fill="#bdbdbd"/>
<rect x="207.91" y="381.6" width="0.8" height="0.8" fill="#bdbdbd"/>
<rect x="212.98" y="381.6" width="0.8" height="0.8" fill="#bdbdbd"/>
<rect x="218.04" y="381.6" width="0.8" height="0.8" fill="#bdbdbd"/>
<rect x="228.18" y="381.6" width="0.8" height="0.8" fill="#bdbdbd"/>
<rect x="233.25" y="381.6" width="0.8" height="0.8" fill="#bdbdbd"/>
<rect x="238.32" y="381.6" width="0.8" height="0.8" fill="#bdbdbd"/>
<rect x="243.38" y="381.6" width="0.8" height="0.8" fill="#bdbdbd"/>
<rect x="253.52" y="381.6" width="0.8" height="0.8" fill="#bdbdbd"/>
<rect x="258.59" y="381.6" width="0.8" height="0.8" fill="#bdbdbd"/>
<rect x="263.66" y="381.6" width="0.8" height="0.8" fill="#bdbdbd"/>
<rect x="268.72" y="381.6" width="0.8" height="0.8" fill="#bdbdbd"/>
<rect x="278.86" y="381.6" width="0.8" height="0.8" fill="#bdbdbd"/>
<rect x="283.93" y="381.6" width="0.8" height="0.8" fill="#bdbdbd"/>
<rect x="289.00" y="381.6" width="0.8" height="0.8" fill="#bdbdbd"/>
<rect x="294.06" y="381.6" width="0.8" height="0.8" fill="#bdbdbd"/>
<rect x="304.20" y="381.6" width="0.8" height="0.8" fill="#bdbdbd"/>
<rect x="309.27" y="381.6" width="0.8" height="0.8" fill="#bdbdbd"/>
<rect x="314.34" y="381.6" width="0.8" height="0.8" fill="#bdbdbd"/>
<rect x="319.40" y="381.6" width="0.8" height="0.8" fill="#bdbdbd"/>
<rect x="329.54" y="381.6" width="0.8" height="0.8" fill="#bdbdbd"/>
<rect x="334.61" y="381.6" width="0.8" height="0.8" fill="#bdbdbd"/>
<rect x="339.68" y="381.6" width="0.8" height="0.8" fill="#bdbdbd"/>
<rect x="344.74" y="381.6" width="0.8" height="0.8" fill="#bdbdbd"/>
<rect x="354.88" y="381.6" width="0.8" height="0.8" fill="#bdbdbd"/>
<rect x="359.95" y="381.6" width="0.8" height="0.8" fill="#bdbdbd"/>
<rect x="365.02" y="381.6" width="0.8" height="0.8" fill="#bdbdbd"/>
<rect x="370.08" y="381.6" width="0.8" height="0.8" fill="#bdbdbd"/>
<rect x="380.22" y="381.6" width="0.8" height="0.8" fill="#bdbdbd"/>
<rect x="385.29" y="381.6" width="0.8" height="0.8" fill="#bdbdbd"/>
<rect x="390.36" y="381.6" width="0.8" height="0.8" fill="#bdbdbd"/>
<rect x="395.42" y="381.6" width="0.8" height="0.8" fill="#bdbdbd"/>
<rect x="405.56" y="381.6" width="0.8" height="0.8" fill="#bdbdbd"/>
<rect x="410.63" y="381.6" width="0.8" height="0.8" fill="#bdbdbd"/>
<rect x="415.70" y="381.6" width="0.8" height="0.8" fill="#bdbdbd"/>
<rect x="420.76" y="381.6" width="0.8" height="0.8" fill="#bdbdbd"/>
<rect x="430.90" y="381.6" width="0.8" height="0.8" fill="#bdbdbd"/>
<rect x="435.97" y="381.6" width="0.8" height="0.8" fill="#bdbdbd"/>
<rect x="441.04" y="381.6" width="0.8" height="0.8" fill="#bdbdbd"/>
<rect x="446.10" y="381.6" width="0.8" height="0.8" fill="#bdbdbd"/>
<rect x="456.24" y="381.6" width="0.8" height="0.8" fill="#bdbdbd"/>
<rect x="461.31" y="381.6" width="0.8" height="0.8" fill="#bdbdbd"/>
<rect x="466.38" y="381.6" width="0.8" height="0.8" fill="#bdbdbd"/>
<rect x="471.44" y="381.6" width="0.8" height="0.8" fill="#bdbdbd"/>
<rect x="481.58" y="381.6" width="0.8" height="0.8" fill="#bdbdbd"/>
<rect x="486.65" y="381.6" width="0.8" height="0.8" fill="#bdbdbd"/>
<rect x="491.72" y="381.6" width="0.8" height="0.8" fill="#bdbdbd"/>
<rect x="496.78" y="381.6" width="0.8" height="0.8" fill="#bdbdbd"/>
<rect x="506.92" y="381.6" width="0.8" height="0.8" fill="#bdbdbd"/>
<rect x="511.99" y="381.6" width="0.8" height="0.8" fill="#bdbdbd"/>
<rect x="517.06" y="381.6" width="0.8" height="0.8" fill="#bdbdbd"/>
<rect x="522.12" y="381.6" width="0.8" height="0.8" fill="#bdbdbd"/>
<rect x="532.26" y="381.6" width="0.8" height="0.8" fill="#bdbdbd"/>
<rect x="537.33" y="381.6" width="0.8" height="0.8" fill="#bdbdbd"/>
<rect x="542.40" y="381.6" width="0.8" height="0.8" fill="#bdbdbd"/>
<rect x="547.46" y="381.6" width="0.8" height="0.8" fill="#bdbdbd"/>
<rect x="557.60" y="381.6" width="0.8" height="0.8" fill="#bdbdbd"/>
<rect x="562.67" y="381.6" width="0.8" height="0.8" fill="#bdbdbd"/>
<rect x="567.74" y="381.6" width="0.8" height="0.8" fill="#bdbdbd"/>
<rect x="572.80" y="381.6" width="0.8" height="0.8" fill="#bdbdbd"/>
<rect x="582.94" y="381.6" width="0.8" height="0.8" fill="#bdbdbd"/>
<rect x="588.01" y="381.6" width="0.8" height="0.8" fill="#bdbdbd"/>
<rect x="593.08" y="381.6" width="0.8" height="0.8" fill="#bdbdbd"/>
<rect x="598.14" y="381.6" width="0.8" height="0.8" fill="#bdbdbd"/>
<rect x="608.28" y="381.6" width="0.8" height="0.8" fill="#bdbdbd"/>
<rect x="613.35" y="381.6" width="0.8" height="0.8" fill="#bdbdbd"/>
<rect x="618.42" y="381.6" width="0.8" height="0.8" fill="#bdbdbd"/>
<rect x="623.48" y="381.6" width="0.8" height="0.8" fill="#bdbdbd"/>
<rect x="633.62" y="381.6" width="0.8" height="0.8" fill="#bdbdbd"/>
<rect x="638.69" y="381.6" width="0.8" height="0.8" fill="#bdbdbd"/>
<text x="291.56" y="372" font-size="7.3" fill="#e6e6e6" stroke="#e6e6e6" stroke-width="0.2">1s</text>
<text x="413.20" y="372" font-size="7.3" fill="#e6e6e6" stroke="#e6e6e6" stroke-width="0.2">2s</text>
<text x="534.83" y="372" font-size="7.3" fill="#e6e6e6" stroke="#e6e6e6" stroke-width="0.2">3s</text>
<rect x="637.2" y="384.3" width="8" height="75.7" fill="#535353"/>
<rect x="639" y="426" width="5.6" height="25.3" rx="1" fill="#666"/>
<rect x="645.3" y="334" width="2.7" height="126" fill="#3a3a3a"/>
<rect x="103.6" y="447" width="0.8" height="13" fill="#474747"/><rect x="150.4" y="447" width="0.8" height="13" fill="#474747"/>
<rect x="177.8" y="455.5" width="65.2" height="6" rx="1" fill="#626262"/>
<text x="112" y="460.8" font-size="7.5" fill="#e6e6e6" stroke="#e6e6e6" stroke-width="0.2">Frame 7</text>
<text x="179.5" y="356" font-size="7" fill="#f0f0f0" stroke="#f0f0f0" stroke-width="0.2">7</text><rect x="179.5" y="357.3" width="4" height="0.5" fill="#aaa"/>
<text x="200.3" y="356" font-size="6.4" fill="#f0f0f0" stroke="#f0f0f0" stroke-width="0.2">0.3 s</text><rect x="200.3" y="357.3" width="8.5" height="0.5" fill="#aaa"/>
<text x="228.2" y="356" font-size="6.3" fill="#f0f0f0" stroke="#f0f0f0" stroke-width="0.2">24.00 fps</text><rect x="228.2" y="357.3" width="16" height="0.5" fill="#aaa"/>
<path d="M273.4,351.5 L268.9,355 L273.4,358.5 Z" fill="#f0f0f0"/>
<rect x="280" y="350.6" width="5" height="8.6" rx="0.8" fill="none" stroke="#e0e0e0" stroke-width="0.9"/><rect x="281.2" y="352" width="2.6" height="4.5" fill="#777"/>
<path d="M292,351.5 L296.5,355 L292,358.5 Z" fill="#f0f0f0"/>
<g fill="#e8e8e8">
<rect x="311" y="350.8" width="1.3" height="6.4"/><path d="M320,350.8 L313,354 L320,357.2 Z"/>
<path d="M329.5,350.8 L323,354 L329.5,357.2 Z"/><rect x="330.5" y="350.8" width="1.3" height="6.4"/>
<path d="M335.8,350.5 L341.8,354 L335.8,357.5 Z"/>
<rect x="345.5" y="350.8" width="1.3" height="6.4"/><path d="M347.8,350.8 L354,354 L347.8,357.2 Z"/>
<path d="M358,350.8 L365,354 L358,357.2 Z"/><rect x="365.2" y="350.8" width="1.3" height="6.4"/>
</g>
<g fill="#d8d8d8"><path d="M378.8,354 L382,351.8 L382,356.2 Z"/><path d="M386,354 L383,351.8 L383,356.2 Z"/><rect x="382.2" y="350.3" width="0.7" height="7.4"/></g>
<path d="M390.5,354.3 L398.8,354.3 L398.8,358 L390.5,358 Z M392,353 L392,351.8 L397,351.8" fill="#d8d8d8" stroke="#d8d8d8" stroke-width="0.7"/>
<rect x="410.0" y="351.2" width="4.6" height="4.6" fill="none" stroke="#d0d0d0" stroke-width="0.8"/><rect x="412.6" y="353.6" width="4.6" height="4.6" fill="#535353" stroke="#d0d0d0" stroke-width="0.8"/>
<rect x="421.2" y="351.2" width="4.6" height="4.6" fill="none" stroke="#d0d0d0" stroke-width="0.8"/><rect x="423.8" y="353.6" width="4.6" height="4.6" fill="#535353" stroke="#d0d0d0" stroke-width="0.8"/>
<rect x="432.5" y="351.2" width="4.6" height="4.6" fill="none" stroke="#d0d0d0" stroke-width="0.8"/><rect x="435.1" y="353.6" width="4.6" height="4.6" fill="#535353" stroke="#d0d0d0" stroke-width="0.8"/>
<path d="M444,351 L446,351 M444,351 L444,353 M451,351 L449,351 M451,351 L451,353 M444,358 L446,358 M444,358 L444,356 M451,358 L449,358 M451,358 L451,356" stroke="#d0d0d0" stroke-width="0.9"/>
<path d="M536.5,355.5 A3.3,3.3 0 1 0 539,351.5" fill="none" stroke="#e8e8e8" stroke-width="1.1"/><path d="M537.6,350 L540.2,351.6 L537.8,353.4 Z" fill="#e8e8e8"/><rect x="535.5" y="357.5" width="7" height="0.7" fill="#e8e8e8"/>
<path d="M549.5,355.8 L552.5,353.2 L555.5,355.8 Z" fill="#e0e0e0"/>
<rect x="563.3" y="354" width="56" height="0.8" fill="#7d7d7d"/>
<circle cx="579.6" cy="354.4" r="2.7" fill="#2a2a2a" stroke="#efefef" stroke-width="1.3"/>
<path d="M625.6,356.4 L629.4,352.2 L631.2,354 L633,352.2 L636.6,356.4 Z" fill="#e8e8e8"/>
</g>
</svg></body></html>
